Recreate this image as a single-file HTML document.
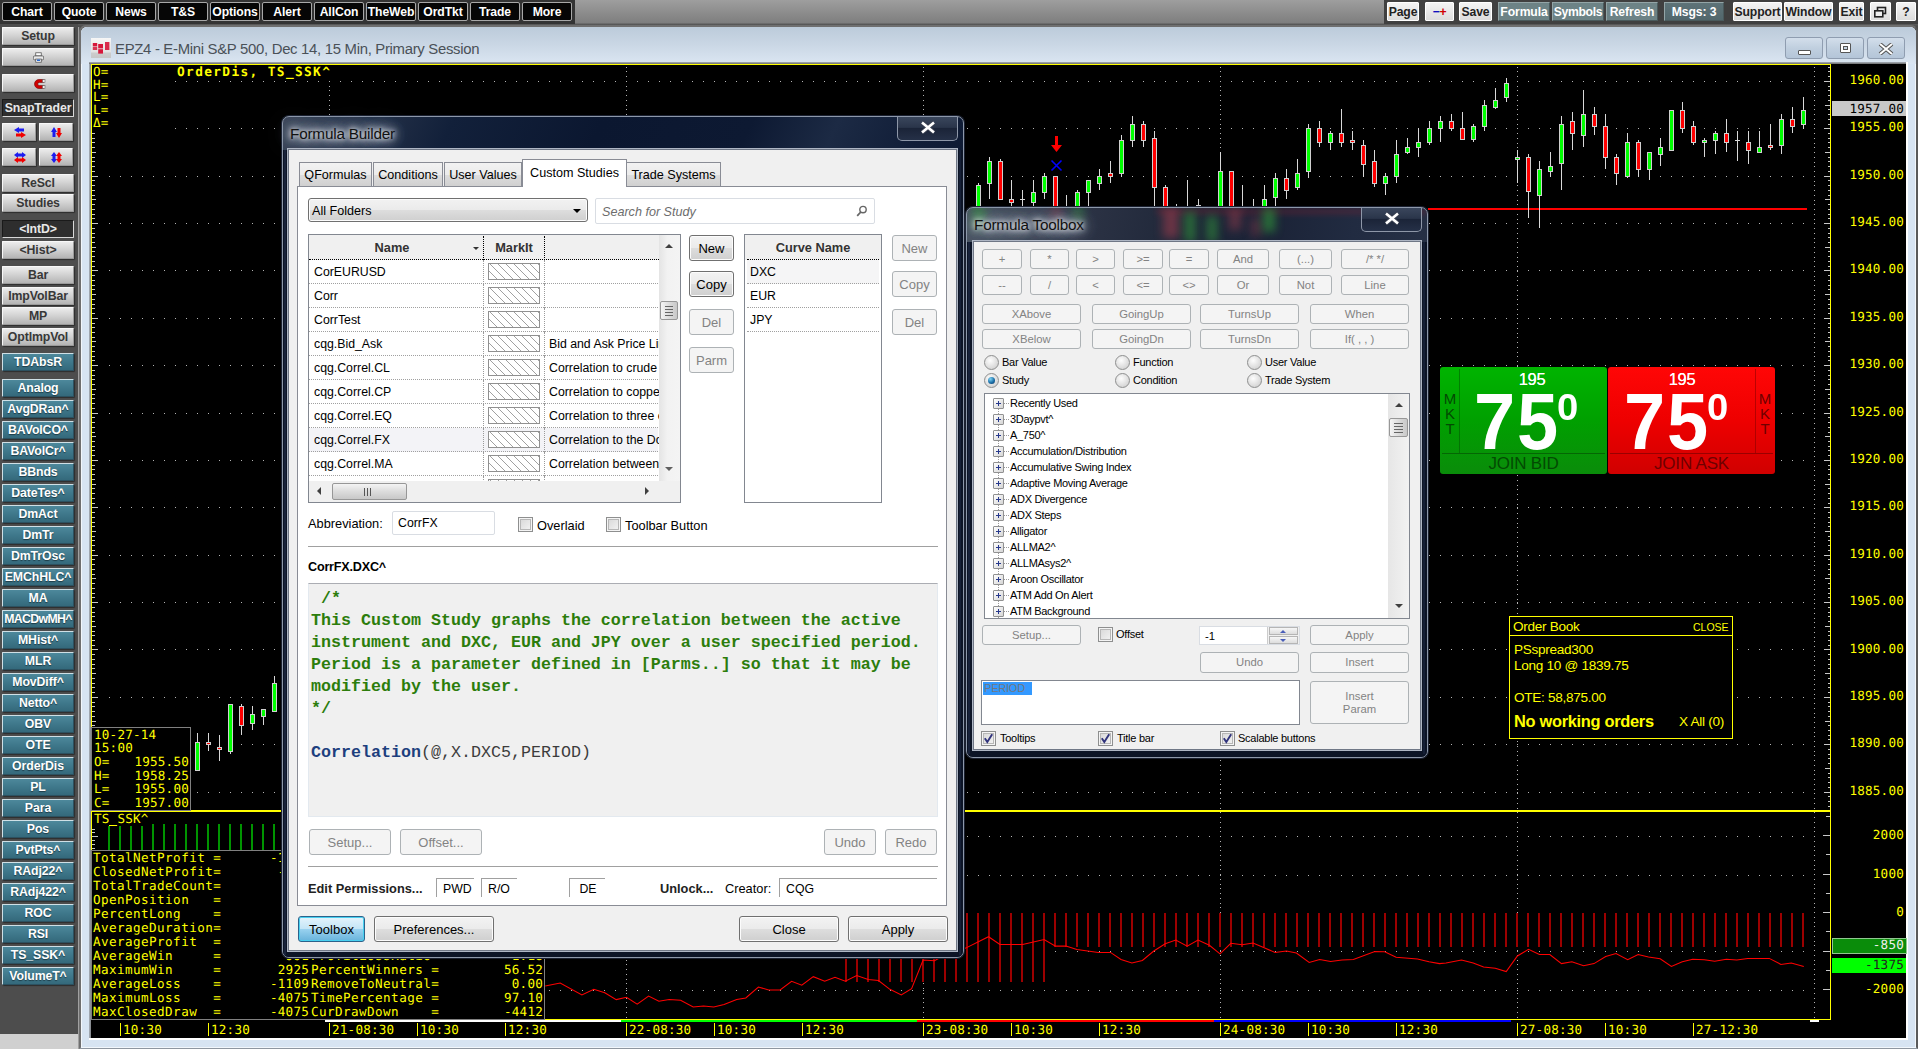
<!DOCTYPE html>
<html lang="en"><head><meta charset="utf-8"><title>CQG - Formula Builder</title>
<style>
*{box-sizing:border-box;margin:0;padding:0}
html,body{width:1918px;height:1049px;overflow:hidden;background:#4d4d4d;font-family:'Liberation Sans',Arial,sans-serif}
.abs{position:absolute}
#root{position:relative;width:1918px;height:1049px;overflow:hidden}
/* top toolbar */
#topbar{position:absolute;left:0;top:0;width:1918px;height:27px;background:linear-gradient(#9e9e9e,#7e7e7e 23px,#5a5a5a 24px,#4a4a4a 27px)}
#topgrad{position:absolute;left:0;top:0;width:575px;height:24px;background:#343434}
.tb{position:absolute;top:2px;height:19px;font-weight:bold;font-size:12.2px;line-height:18px;text-align:center;white-space:nowrap;overflow:hidden;letter-spacing:-0.1px}
.tb.k{background:#060606;color:#fff;border:1px solid #a8a8a8;border-radius:2px;text-shadow:0 0 1px #000}
.tb.w{background:linear-gradient(#f4f4f4,#dcdcdc);color:#222;border:1px solid #fff;border-radius:1px}
.tb.t{background:#6d8386;color:#fff;border:1px solid #93a5a7;border-bottom-color:#4a5a5c;border-right-color:#4a5a5c}
/* sidebar */
#side{position:absolute;left:0;top:24px;width:78px;height:1010px;background:#4d4d4d}
#sidebot{position:absolute;left:0;top:1034px;width:78px;height:15px;background:#d0d0d0}
#sideedge{position:absolute;left:78px;top:27px;width:3px;height:1022px;background:linear-gradient(90deg,#a0a0a0 0,#a0a0a0 1px,#4e4e4e 1.6px,#4a4a4a 3px)}
.sb{position:absolute;left:2px;width:72px;height:18px;font-weight:bold;font-size:12.3px;line-height:17px;text-align:center;white-space:nowrap;overflow:hidden;letter-spacing:-0.1px;border-radius:1px}
.sb.g{background:linear-gradient(#ececec,#d4d4d4 45%,#b4b4b4);color:#383838;border:1px solid #f8f8f8;border-right-color:#9a9a9a;border-bottom-color:#9a9a9a;box-shadow:1px 1px 1px #2e2e2e}
.sb.d{background:#2e2e2e;color:#e8e8e8;border:1px solid #1a1a1a;border-right-color:#d8d8d8;border-bottom-color:#d8d8d8}
.sb.t{background:linear-gradient(#4d889b,#3f788b 50%,#34697b);color:#fff;border:1px solid #cfe0e6;border-right-color:#2c5160;border-bottom-color:#2c5160;text-shadow:0 1px 1px #1d3b46;box-shadow:1px 1px 1px #2e2e2e}
.sb.h{width:34px}
/* chart window frame */
#win{position:absolute;left:81px;top:27px;width:1835px;height:1021px;background:#d7e4f2;border-radius:6px 6px 0 0;box-shadow:inset 0 0 0 1px #f2f7fc}
#wintitle{position:absolute;left:81px;top:27px;width:1835px;height:37px;background:linear-gradient(#bccbda,#c9d6e4 45%,#dbe6f2);border-radius:6px 6px 0 0}
#winfr{position:absolute;left:79px;top:25px;width:1839px;height:1024px;border:2px solid #6f6f6f;border-right-color:#5a5a5a;border-bottom-color:#8e96a0;border-radius:7px 7px 0 0}
#wtext{position:absolute;left:115px;top:39px;font-size:14.9px;line-height:20px;color:#4a5158;white-space:nowrap;letter-spacing:-0.3px}
.wb{position:absolute;top:37px;height:22px;width:38px;border:1px solid #8f9db0;border-radius:3px;background:linear-gradient(#d3deeb,#c0cfdf 50%,#b4c5d8)}

/* aero dialogs */
.dlg{position:absolute;border:1px solid #8d98aa;border-radius:7px;box-shadow:0 0 0 1px #1a2030}
.dlgtitle{position:absolute;font-size:15.3px;color:#111;white-space:nowrap;letter-spacing:-0.2px;text-shadow:0 0 5px #fff,0 0 9px #e8edf4,0 0 13px #c4ccd9,0 0 17px #a9b3c3,0 0 22px #8c98aa}
.dclose{position:absolute;border:1px solid #8e97a8;border-top:none;border-radius:0 0 5px 5px;background:linear-gradient(#3a465c,#2a354a 45%,#1b2438 50%,#253047)}
.client{position:absolute;background:#f0f0f0;border:1px solid #6f7786;box-shadow:0 0 0 1px #aeb6c4}
.ui{position:absolute;font-size:12.8px;color:#000;white-space:nowrap;line-height:15px}
.btn{position:absolute;border:1px solid #707070;border-radius:3px;background:linear-gradient(#f3f3f3,#ebebeb 48%,#dddddd 52%,#cfcfcf);box-shadow:inset 0 0 0 1px #fcfcfc;font-size:13px;text-align:center;color:#000;white-space:nowrap}
.btn.dis{border-color:#adb2b5;background:#f4f4f4;color:#838383;box-shadow:none}
.btn.def{border-color:#2c628b;background:linear-gradient(#e5f4fc,#c4e5f6 48%,#98d1ef 52%,#68b3db);box-shadow:inset 0 0 0 1px #48d0f0}
.inp{position:absolute;background:#fff;border:1px solid #abadb3;border-top-color:#8e9198;font-size:12.3px;white-space:nowrap;overflow:hidden}
.chk{position:absolute;width:15px;height:15px;border:1px solid #8e8f8f;background:linear-gradient(135deg,#d5d5d5,#f6f6f6);box-shadow:inset 0 0 0 1px #f4f4f4, inset 0 0 0 2px #b7b7b7}
.hatch{position:absolute;left:4px;top:3px;width:52px;height:17px;border:1px solid #909090;background:repeating-linear-gradient(45deg,#fff 0,#fff 5.007px,#a0a0a0 5.007px,#a0a0a0 5.657px)}
.trow{position:absolute;left:0;width:349px;height:24px;border-bottom:1px dotted #a0a0a0;font-size:12.3px;line-height:25px}
.trow span{position:absolute;top:0;white-space:nowrap}
.code{position:absolute;font-family:'Liberation Mono','DejaVu Sans Mono',monospace;font-size:16.67px;line-height:22px;font-weight:bold;color:#2c7d0c;white-space:pre}
.sbtrack{position:absolute;background:#f0f0f0}
.thumb{position:absolute;border:1px solid #979797;border-radius:2px;background:linear-gradient(90deg,#f4f4f4,#dcdcdc 50%,#c8c8c8)}
.thumbh{position:absolute;border:1px solid #979797;border-radius:2px;background:linear-gradient(#f4f4f4,#dcdcdc 50%,#c8c8c8)}

.tbtn{position:absolute;border:1px solid #adb2b5;border-radius:3px;background:#f4f4f4;color:#838383;font-size:11.3px;text-align:center;white-space:nowrap;height:20px;line-height:18px}
.rad{position:absolute;width:15px;height:15px;border-radius:50%;border:1px solid #8e8f8f;background:radial-gradient(circle at 40% 35%,#fdfdfd,#d8d8d8 70%,#c0c0c0)}
.tl{position:absolute;font-size:11px;letter-spacing:-0.25px;white-space:nowrap;color:#000;line-height:13px}
.tree{position:absolute;left:25px;font-size:11px;letter-spacing:-0.3px;white-space:nowrap;color:#000;line-height:14px;height:16px}
.plus{position:absolute;left:8px;width:11px;height:11px;border:1px solid #919191;border-radius:1px;background:linear-gradient(135deg,#fff,#d5d5d5)}
.plus:before{content:"";position:absolute;left:2px;top:4px;width:5px;height:1px;background:#26388c}
.plus:after{content:"";position:absolute;left:4px;top:2px;width:1px;height:5px;background:#26388c}
.snap{position:absolute;top:367px;height:107px;border-radius:3px;overflow:hidden;font-family:'Liberation Sans',Arial,sans-serif}
.ob{position:absolute;color:#ffff00;font-size:13.6px;white-space:nowrap;line-height:16px;letter-spacing:-0.3px}
</style></head>
<body><div id="root">
<div id="topbar"><div id="topgrad"></div><div class="tb k" style="left:2px;width:50px">Chart</div><div class="tb k" style="left:54px;width:50px">Quote</div><div class="tb k" style="left:106px;width:50px">News</div><div class="tb k" style="left:158px;width:50px">T&amp;S</div><div class="tb k" style="left:210px;width:50px">Options</div><div class="tb k" style="left:262px;width:50px">Alert</div><div class="tb k" style="left:314px;width:50px">AllCon</div><div class="tb k" style="left:366px;width:50px">TheWeb</div><div class="tb k" style="left:418px;width:50px">OrdTkt</div><div class="tb k" style="left:470px;width:50px">Trade</div><div class="tb k" style="left:522px;width:50px">More</div><div style="position:absolute;left:1384px;top:0;width:534px;height:24px;background:#404040"></div><div class="tb w" style="left:1387px;width:32px">Page</div><div class="tb w" style="left:1425px;width:29px"><span style="color:#1010c0">&#8722;</span><span style="color:#d00000">+</span></div><div class="tb w" style="left:1459px;width:33px">Save</div><div class="tb t" style="left:1498px;width:52px">Formula</div><div class="tb t" style="left:1552px;width:52px;letter-spacing:-0.35px">Symbols</div><div class="tb t" style="left:1606px;width:52px">Refresh</div><div class="tb t" style="left:1664px;width:60px;background:linear-gradient(#5e7378,#52676c)">Msgs: 3</div><div class="tb w" style="left:1733px;width:49px">Support</div><div class="tb w" style="left:1784px;width:49px">Window</div><div class="tb w" style="left:1839px;width:25px">Exit</div><div class="tb w" style="left:1870px;width:21px"><svg width="13" height="12" viewBox="0 0 13 12" style="position:absolute;left:3px;top:3px"><rect x="3.5" y="1.5" width="8" height="6" fill="none" stroke="#222" stroke-width="1.6"/><rect x="0.8" y="4.8" width="8" height="6" fill="#eee" stroke="#222" stroke-width="1.6"/></svg></div><div class="tb w" style="left:1896px;width:20px">?</div></div>
<div id="side"></div><div id="sidebot"></div><div id="sideedge"></div><div class="sb g" style="top:27px">Setup</div><div class="sb g" style="top:48px"><svg width="11" height="11" viewBox="0 0 14 13" style="position:absolute;left:30px;top:3px"><rect x="3.5" y="0.5" width="7" height="4" fill="#fff" stroke="#555"/><rect x="0.5" y="4.5" width="13" height="5" rx="1.5" fill="#e8e8e8" stroke="#555"/><rect x="3.5" y="8.5" width="7" height="4" fill="#fff" stroke="#555"/><rect x="5" y="9" width="4" height="2" fill="#2a6ad0"/></svg></div><div class="sb g" style="top:74px"><svg width="14" height="12" viewBox="0 0 14 12" style="position:absolute;left:30px;top:3px"><path d="M11 1.5 H6 A4.5 4.5 0 0 0 6 10.5 H11 V7.6 H6.3 A1.6 1.6 0 0 1 6.3 4.4 H11 Z" fill="#d00000" stroke="#700" stroke-width="0.6"/><rect x="9.5" y="1.5" width="2.5" height="2.9" fill="#eee" stroke="#555" stroke-width="0.5"/><rect x="9.5" y="7.6" width="2.5" height="2.9" fill="#eee" stroke="#555" stroke-width="0.5"/></svg></div><div class="sb d" style="top:99px">SnapTrader</div><div class="sb g h" style="top:123px"><svg width="12" height="11" viewBox="0 0 12 11" style="position:absolute;left:11px;top:3px"><path d="M0 3 L5 0 V1.5 H10 V4.5 H5 V6 Z" fill="#1c1cf0"/><path d="M12 8 L7 5 V6.5 H2 V9.5 H7 V11 Z" fill="#f00000"/></svg></div><div class="sb g h" style="top:123px;left:39px"><svg width="12" height="11" viewBox="0 0 12 11" style="position:absolute;left:11px;top:3px"><path d="M3 0 L6 5 H4.5 V10 H1.5 V5 H0 Z" fill="#1c1cf0"/><path d="M8 11 L5 6 H6.5 V1 H9.5 V6 H11 Z" fill="#f00000"/></svg></div><div class="sb g h" style="top:148px"><svg width="12" height="11" viewBox="0 0 12 11" style="position:absolute;left:11px;top:3px"><path d="M0 3 L4 0 V1.5 H8 V0 L12 3 L8 6 V4.5 H4 V6 Z" fill="#1c1cf0"/><path d="M0 8 L4 5 V6.5 H8 V5 L12 8 L8 11 V9.5 H4 V11 Z" fill="#f00000"/></svg></div><div class="sb g h" style="top:148px;left:39px"><svg width="12" height="11" viewBox="0 0 12 11" style="position:absolute;left:11px;top:3px"><path d="M3 0 L6 4 H4.5 V7 H6 L3 11 L0 7 H1.5 V4 H0 Z" fill="#1c1cf0"/><path d="M8 0 L11 4 H9.5 V7 H11 L8 11 L5 7 H6.5 V4 H5 Z" fill="#f00000"/></svg></div><div class="sb g" style="top:174px">ReScl</div><div class="sb g" style="top:194px">Studies</div><div class="sb d" style="top:220px">&lt;IntD&gt;</div><div class="sb g" style="top:241px">&lt;Hist&gt;</div><div class="sb g" style="top:266px">Bar</div><div class="sb g" style="top:287px">ImpVolBar</div><div class="sb g" style="top:307px">MP</div><div class="sb g" style="top:328px">OptImpVol</div><div class="sb t" style="top:353px">TDAbsR</div><div class="sb t" style="top:379px">Analog</div><div class="sb t" style="top:400px">AvgDRan^</div><div class="sb t" style="top:421px">BAVolCO^</div><div class="sb t" style="top:442px">BAVolCr^</div><div class="sb t" style="top:463px">BBnds</div><div class="sb t" style="top:484px">DateTes^</div><div class="sb t" style="top:505px">DmAct</div><div class="sb t" style="top:526px">DmTr</div><div class="sb t" style="top:547px">DmTrOsc</div><div class="sb t" style="top:568px">EMChHLC^</div><div class="sb t" style="top:589px">MA</div><div class="sb t" style="top:610px;letter-spacing:-0.65px">MACDwMH^</div><div class="sb t" style="top:631px">MHist^</div><div class="sb t" style="top:652px">MLR</div><div class="sb t" style="top:673px">MovDiff^</div><div class="sb t" style="top:694px">Netto^</div><div class="sb t" style="top:715px">OBV</div><div class="sb t" style="top:736px">OTE</div><div class="sb t" style="top:757px">OrderDis</div><div class="sb t" style="top:778px">PL</div><div class="sb t" style="top:799px">Para</div><div class="sb t" style="top:820px">Pos</div><div class="sb t" style="top:841px">PvtPts^</div><div class="sb t" style="top:862px">RAdj22^</div><div class="sb t" style="top:883px">RAdj422^</div><div class="sb t" style="top:904px">ROC</div><div class="sb t" style="top:925px">RSI</div><div class="sb t" style="top:946px">TS_SSK^</div><div class="sb t" style="top:967px">VolumeT^</div>
<div id="winfr"></div><div id="win"></div><div id="wintitle"></div><svg width="20" height="20" viewBox="0 0 20 20" style="position:absolute;left:91px;top:38px"><defs><linearGradient id="wig" x1="0" y1="0" x2="0" y2="1"><stop offset="0" stop-color="#f6f6f6"/><stop offset="0.7" stop-color="#e2e2e2"/><stop offset="0.75" stop-color="#cccccc"/><stop offset="1" stop-color="#c6c6c6"/></linearGradient></defs><rect width="20" height="20" fill="url(#wig)"/><g fill="#d6163a"><rect x="1.8" y="5" width="4.4" height="3"/><rect x="1.8" y="8.5" width="4.4" height="3.5" opacity=".85"/><rect x="7.2" y="6" width="4.8" height="4.4"/><rect x="7.2" y="11.2" width="4.8" height="4.4"/><rect x="14" y="4" width="4.4" height="8" opacity=".9"/></g></svg><div id="wtext">EPZ4 - E-Mini S&amp;P 500, Dec 14, 15 Min, Primary Session</div><div class="wb" style="left:1785px"><div style="position:absolute;left:12px;top:12px;width:13px;height:5px;border:1px solid #555;background:#fff;border-radius:1px"></div></div><div class="wb" style="left:1826px"><div style="position:absolute;left:13px;top:5px;width:11px;height:10px;border:1px solid #555;background:#fff;border-radius:1px"><div style="position:absolute;left:2px;top:2px;width:5px;height:4px;border:1px solid #555;background:#c5d3e2"></div></div></div><div class="wb" style="left:1867px"><svg width="16" height="12" viewBox="0 0 16 12" style="position:absolute;left:10px;top:5px"><path d="M2 1 L14 11 M14 1 L2 11" stroke="#555" stroke-width="4"/><path d="M2 1 L14 11 M14 1 L2 11" stroke="#fff" stroke-width="2"/></svg></div><div class="abs" style="left:89px;top:1038px;width:1819px;height:2px;background:#fff"></div><div class="abs" style="left:1906px;top:62px;width:2px;height:978px;background:#fff"></div><div class="abs" style="left:89px;top:62px;width:3px;height:976px;background:linear-gradient(90deg,#aab2bc,#6c6c6c)"></div><div class="abs" style="left:89px;top:62px;width:1817px;height:2px;background:linear-gradient(#aab2bc,#6c6c6c)"></div>
<svg class="chart" width="1918" height="1049" viewBox="0 0 1918 1049" style="position:absolute;left:0;top:0" shape-rendering="crispEdges">
<defs><pattern id="hd" x="978" y="0" width="11" height="1" patternUnits="userSpaceOnUse"><rect x="0" y="0" width="1" height="1" fill="#b4b4b4"/></pattern><pattern id="vd" x="0" y="62" width="1" height="19" patternUnits="userSpaceOnUse"><rect x="0" y="0" width="1" height="1" fill="#b4b4b4"/><rect x="0" y="5" width="1" height="1" fill="#b4b4b4"/><rect x="0" y="9" width="1" height="1" fill="#b4b4b4"/><rect x="0" y="14" width="1" height="1" fill="#b4b4b4"/></pattern></defs>
<rect x="91" y="64" width="1815" height="974" fill="#000"/>
<rect x="100" y="81" width="1712" height="1" fill="url(#hd)"/>
<rect x="100" y="128" width="1712" height="1" fill="url(#hd)"/>
<rect x="100" y="176" width="1712" height="1" fill="url(#hd)"/>
<rect x="100" y="223" width="1712" height="1" fill="url(#hd)"/>
<rect x="100" y="270" width="1712" height="1" fill="url(#hd)"/>
<rect x="100" y="318" width="1712" height="1" fill="url(#hd)"/>
<rect x="100" y="365" width="1712" height="1" fill="url(#hd)"/>
<rect x="100" y="413" width="1712" height="1" fill="url(#hd)"/>
<rect x="100" y="460" width="1712" height="1" fill="url(#hd)"/>
<rect x="100" y="507" width="1712" height="1" fill="url(#hd)"/>
<rect x="100" y="555" width="1712" height="1" fill="url(#hd)"/>
<rect x="100" y="602" width="1712" height="1" fill="url(#hd)"/>
<rect x="100" y="649" width="1712" height="1" fill="url(#hd)"/>
<rect x="100" y="697" width="1712" height="1" fill="url(#hd)"/>
<rect x="100" y="744" width="1712" height="1" fill="url(#hd)"/>
<rect x="100" y="792" width="1712" height="1" fill="url(#hd)"/>
<rect x="298" y="836" width="1514" height="1" fill="url(#hd)"/>
<rect x="298" y="875" width="1514" height="1" fill="url(#hd)"/>
<rect x="298" y="913" width="1514" height="1" fill="url(#hd)"/>
<rect x="298" y="951" width="1514" height="1" fill="url(#hd)"/>
<rect x="298" y="990" width="1514" height="1" fill="url(#hd)"/>
<rect x="329" y="67" width="1" height="951" fill="url(#vd)"/>
<rect x="626" y="67" width="1" height="951" fill="url(#vd)"/>
<rect x="923" y="67" width="1" height="951" fill="url(#vd)"/>
<rect x="1220" y="67" width="1" height="951" fill="url(#vd)"/>
<rect x="1517" y="67" width="1" height="951" fill="url(#vd)"/>
<rect x="1814" y="67" width="1" height="951" fill="url(#vd)"/>
<rect x="92" y="65" width="82" height="66" fill="#000"/>
<rect x="174" y="65" width="160" height="15" fill="#000"/>
<rect x="91" y="64" width="1740" height="1" fill="#ffff00"/>
<rect x="91" y="64" width="1" height="956" fill="#ffff00"/>
<rect x="1830" y="64" width="1" height="956" fill="#ffff00"/>
<rect x="91" y="1019" width="1740" height="1" fill="#ffff00"/>
<rect x="91" y="810" width="1740" height="2" fill="#ffff00"/>
<rect x="1828" y="67" width="2" height="1" fill="#c8c8c8"/>
<rect x="1828" y="71" width="2" height="1" fill="#c8c8c8"/>
<rect x="1828" y="76" width="2" height="1" fill="#c8c8c8"/>
<rect x="1824" y="81" width="6" height="1" fill="#c8c8c8"/>
<rect x="1828" y="86" width="2" height="1" fill="#c8c8c8"/>
<rect x="1828" y="90" width="2" height="1" fill="#c8c8c8"/>
<rect x="1828" y="95" width="2" height="1" fill="#c8c8c8"/>
<rect x="1828" y="100" width="2" height="1" fill="#c8c8c8"/>
<rect x="1825" y="105" width="5" height="1" fill="#c8c8c8"/>
<rect x="1828" y="109" width="2" height="1" fill="#c8c8c8"/>
<rect x="1828" y="114" width="2" height="1" fill="#c8c8c8"/>
<rect x="1828" y="119" width="2" height="1" fill="#c8c8c8"/>
<rect x="1828" y="124" width="2" height="1" fill="#c8c8c8"/>
<rect x="1824" y="128" width="6" height="1" fill="#c8c8c8"/>
<rect x="1828" y="133" width="2" height="1" fill="#c8c8c8"/>
<rect x="92" y="133" width="3" height="1" fill="#c8c8c8"/>
<rect x="1828" y="138" width="2" height="1" fill="#c8c8c8"/>
<rect x="92" y="138" width="3" height="1" fill="#c8c8c8"/>
<rect x="1828" y="142" width="2" height="1" fill="#c8c8c8"/>
<rect x="92" y="142" width="3" height="1" fill="#c8c8c8"/>
<rect x="1828" y="147" width="2" height="1" fill="#c8c8c8"/>
<rect x="92" y="147" width="3" height="1" fill="#c8c8c8"/>
<rect x="1825" y="152" width="5" height="1" fill="#c8c8c8"/>
<rect x="92" y="152" width="4" height="1" fill="#c8c8c8"/>
<rect x="1828" y="157" width="2" height="1" fill="#c8c8c8"/>
<rect x="92" y="157" width="3" height="1" fill="#c8c8c8"/>
<rect x="1828" y="161" width="2" height="1" fill="#c8c8c8"/>
<rect x="92" y="161" width="3" height="1" fill="#c8c8c8"/>
<rect x="1828" y="166" width="2" height="1" fill="#c8c8c8"/>
<rect x="92" y="166" width="3" height="1" fill="#c8c8c8"/>
<rect x="1828" y="171" width="2" height="1" fill="#c8c8c8"/>
<rect x="92" y="171" width="3" height="1" fill="#c8c8c8"/>
<rect x="1824" y="176" width="6" height="1" fill="#c8c8c8"/>
<rect x="92" y="176" width="6" height="1" fill="#c8c8c8"/>
<rect x="1828" y="180" width="2" height="1" fill="#c8c8c8"/>
<rect x="92" y="180" width="3" height="1" fill="#c8c8c8"/>
<rect x="1828" y="185" width="2" height="1" fill="#c8c8c8"/>
<rect x="92" y="185" width="3" height="1" fill="#c8c8c8"/>
<rect x="1828" y="190" width="2" height="1" fill="#c8c8c8"/>
<rect x="92" y="190" width="3" height="1" fill="#c8c8c8"/>
<rect x="1828" y="195" width="2" height="1" fill="#c8c8c8"/>
<rect x="92" y="195" width="3" height="1" fill="#c8c8c8"/>
<rect x="1825" y="199" width="5" height="1" fill="#c8c8c8"/>
<rect x="92" y="199" width="4" height="1" fill="#c8c8c8"/>
<rect x="1828" y="204" width="2" height="1" fill="#c8c8c8"/>
<rect x="92" y="204" width="3" height="1" fill="#c8c8c8"/>
<rect x="1828" y="209" width="2" height="1" fill="#c8c8c8"/>
<rect x="92" y="209" width="3" height="1" fill="#c8c8c8"/>
<rect x="1828" y="214" width="2" height="1" fill="#c8c8c8"/>
<rect x="92" y="214" width="3" height="1" fill="#c8c8c8"/>
<rect x="1828" y="218" width="2" height="1" fill="#c8c8c8"/>
<rect x="92" y="218" width="3" height="1" fill="#c8c8c8"/>
<rect x="1824" y="223" width="6" height="1" fill="#c8c8c8"/>
<rect x="92" y="223" width="6" height="1" fill="#c8c8c8"/>
<rect x="1828" y="228" width="2" height="1" fill="#c8c8c8"/>
<rect x="92" y="228" width="3" height="1" fill="#c8c8c8"/>
<rect x="1828" y="233" width="2" height="1" fill="#c8c8c8"/>
<rect x="92" y="233" width="3" height="1" fill="#c8c8c8"/>
<rect x="1828" y="237" width="2" height="1" fill="#c8c8c8"/>
<rect x="92" y="237" width="3" height="1" fill="#c8c8c8"/>
<rect x="1828" y="242" width="2" height="1" fill="#c8c8c8"/>
<rect x="92" y="242" width="3" height="1" fill="#c8c8c8"/>
<rect x="1825" y="247" width="5" height="1" fill="#c8c8c8"/>
<rect x="92" y="247" width="4" height="1" fill="#c8c8c8"/>
<rect x="1828" y="251" width="2" height="1" fill="#c8c8c8"/>
<rect x="92" y="251" width="3" height="1" fill="#c8c8c8"/>
<rect x="1828" y="256" width="2" height="1" fill="#c8c8c8"/>
<rect x="92" y="256" width="3" height="1" fill="#c8c8c8"/>
<rect x="1828" y="261" width="2" height="1" fill="#c8c8c8"/>
<rect x="92" y="261" width="3" height="1" fill="#c8c8c8"/>
<rect x="1828" y="266" width="2" height="1" fill="#c8c8c8"/>
<rect x="92" y="266" width="3" height="1" fill="#c8c8c8"/>
<rect x="1824" y="270" width="6" height="1" fill="#c8c8c8"/>
<rect x="92" y="270" width="6" height="1" fill="#c8c8c8"/>
<rect x="1828" y="275" width="2" height="1" fill="#c8c8c8"/>
<rect x="92" y="275" width="3" height="1" fill="#c8c8c8"/>
<rect x="1828" y="280" width="2" height="1" fill="#c8c8c8"/>
<rect x="92" y="280" width="3" height="1" fill="#c8c8c8"/>
<rect x="1828" y="285" width="2" height="1" fill="#c8c8c8"/>
<rect x="92" y="285" width="3" height="1" fill="#c8c8c8"/>
<rect x="1828" y="289" width="2" height="1" fill="#c8c8c8"/>
<rect x="92" y="289" width="3" height="1" fill="#c8c8c8"/>
<rect x="1825" y="294" width="5" height="1" fill="#c8c8c8"/>
<rect x="92" y="294" width="4" height="1" fill="#c8c8c8"/>
<rect x="1828" y="299" width="2" height="1" fill="#c8c8c8"/>
<rect x="92" y="299" width="3" height="1" fill="#c8c8c8"/>
<rect x="1828" y="304" width="2" height="1" fill="#c8c8c8"/>
<rect x="92" y="304" width="3" height="1" fill="#c8c8c8"/>
<rect x="1828" y="308" width="2" height="1" fill="#c8c8c8"/>
<rect x="92" y="308" width="3" height="1" fill="#c8c8c8"/>
<rect x="1828" y="313" width="2" height="1" fill="#c8c8c8"/>
<rect x="92" y="313" width="3" height="1" fill="#c8c8c8"/>
<rect x="1824" y="318" width="6" height="1" fill="#c8c8c8"/>
<rect x="92" y="318" width="6" height="1" fill="#c8c8c8"/>
<rect x="1828" y="323" width="2" height="1" fill="#c8c8c8"/>
<rect x="92" y="323" width="3" height="1" fill="#c8c8c8"/>
<rect x="1828" y="327" width="2" height="1" fill="#c8c8c8"/>
<rect x="92" y="327" width="3" height="1" fill="#c8c8c8"/>
<rect x="1828" y="332" width="2" height="1" fill="#c8c8c8"/>
<rect x="92" y="332" width="3" height="1" fill="#c8c8c8"/>
<rect x="1828" y="337" width="2" height="1" fill="#c8c8c8"/>
<rect x="92" y="337" width="3" height="1" fill="#c8c8c8"/>
<rect x="1825" y="341" width="5" height="1" fill="#c8c8c8"/>
<rect x="92" y="341" width="4" height="1" fill="#c8c8c8"/>
<rect x="1828" y="346" width="2" height="1" fill="#c8c8c8"/>
<rect x="92" y="346" width="3" height="1" fill="#c8c8c8"/>
<rect x="1828" y="351" width="2" height="1" fill="#c8c8c8"/>
<rect x="92" y="351" width="3" height="1" fill="#c8c8c8"/>
<rect x="1828" y="356" width="2" height="1" fill="#c8c8c8"/>
<rect x="92" y="356" width="3" height="1" fill="#c8c8c8"/>
<rect x="1828" y="360" width="2" height="1" fill="#c8c8c8"/>
<rect x="92" y="360" width="3" height="1" fill="#c8c8c8"/>
<rect x="1824" y="365" width="6" height="1" fill="#c8c8c8"/>
<rect x="92" y="365" width="6" height="1" fill="#c8c8c8"/>
<rect x="1828" y="370" width="2" height="1" fill="#c8c8c8"/>
<rect x="92" y="370" width="3" height="1" fill="#c8c8c8"/>
<rect x="1828" y="375" width="2" height="1" fill="#c8c8c8"/>
<rect x="92" y="375" width="3" height="1" fill="#c8c8c8"/>
<rect x="1828" y="379" width="2" height="1" fill="#c8c8c8"/>
<rect x="92" y="379" width="3" height="1" fill="#c8c8c8"/>
<rect x="1828" y="384" width="2" height="1" fill="#c8c8c8"/>
<rect x="92" y="384" width="3" height="1" fill="#c8c8c8"/>
<rect x="1825" y="389" width="5" height="1" fill="#c8c8c8"/>
<rect x="92" y="389" width="4" height="1" fill="#c8c8c8"/>
<rect x="1828" y="394" width="2" height="1" fill="#c8c8c8"/>
<rect x="92" y="394" width="3" height="1" fill="#c8c8c8"/>
<rect x="1828" y="398" width="2" height="1" fill="#c8c8c8"/>
<rect x="92" y="398" width="3" height="1" fill="#c8c8c8"/>
<rect x="1828" y="403" width="2" height="1" fill="#c8c8c8"/>
<rect x="92" y="403" width="3" height="1" fill="#c8c8c8"/>
<rect x="1828" y="408" width="2" height="1" fill="#c8c8c8"/>
<rect x="92" y="408" width="3" height="1" fill="#c8c8c8"/>
<rect x="1824" y="413" width="6" height="1" fill="#c8c8c8"/>
<rect x="92" y="413" width="6" height="1" fill="#c8c8c8"/>
<rect x="1828" y="417" width="2" height="1" fill="#c8c8c8"/>
<rect x="92" y="417" width="3" height="1" fill="#c8c8c8"/>
<rect x="1828" y="422" width="2" height="1" fill="#c8c8c8"/>
<rect x="92" y="422" width="3" height="1" fill="#c8c8c8"/>
<rect x="1828" y="427" width="2" height="1" fill="#c8c8c8"/>
<rect x="92" y="427" width="3" height="1" fill="#c8c8c8"/>
<rect x="1828" y="432" width="2" height="1" fill="#c8c8c8"/>
<rect x="92" y="432" width="3" height="1" fill="#c8c8c8"/>
<rect x="1825" y="436" width="5" height="1" fill="#c8c8c8"/>
<rect x="92" y="436" width="4" height="1" fill="#c8c8c8"/>
<rect x="1828" y="441" width="2" height="1" fill="#c8c8c8"/>
<rect x="92" y="441" width="3" height="1" fill="#c8c8c8"/>
<rect x="1828" y="446" width="2" height="1" fill="#c8c8c8"/>
<rect x="92" y="446" width="3" height="1" fill="#c8c8c8"/>
<rect x="1828" y="450" width="2" height="1" fill="#c8c8c8"/>
<rect x="92" y="450" width="3" height="1" fill="#c8c8c8"/>
<rect x="1828" y="455" width="2" height="1" fill="#c8c8c8"/>
<rect x="92" y="455" width="3" height="1" fill="#c8c8c8"/>
<rect x="1824" y="460" width="6" height="1" fill="#c8c8c8"/>
<rect x="92" y="460" width="6" height="1" fill="#c8c8c8"/>
<rect x="1828" y="465" width="2" height="1" fill="#c8c8c8"/>
<rect x="92" y="465" width="3" height="1" fill="#c8c8c8"/>
<rect x="1828" y="469" width="2" height="1" fill="#c8c8c8"/>
<rect x="92" y="469" width="3" height="1" fill="#c8c8c8"/>
<rect x="1828" y="474" width="2" height="1" fill="#c8c8c8"/>
<rect x="92" y="474" width="3" height="1" fill="#c8c8c8"/>
<rect x="1828" y="479" width="2" height="1" fill="#c8c8c8"/>
<rect x="92" y="479" width="3" height="1" fill="#c8c8c8"/>
<rect x="1825" y="484" width="5" height="1" fill="#c8c8c8"/>
<rect x="92" y="484" width="4" height="1" fill="#c8c8c8"/>
<rect x="1828" y="488" width="2" height="1" fill="#c8c8c8"/>
<rect x="92" y="488" width="3" height="1" fill="#c8c8c8"/>
<rect x="1828" y="493" width="2" height="1" fill="#c8c8c8"/>
<rect x="92" y="493" width="3" height="1" fill="#c8c8c8"/>
<rect x="1828" y="498" width="2" height="1" fill="#c8c8c8"/>
<rect x="92" y="498" width="3" height="1" fill="#c8c8c8"/>
<rect x="1828" y="503" width="2" height="1" fill="#c8c8c8"/>
<rect x="92" y="503" width="3" height="1" fill="#c8c8c8"/>
<rect x="1824" y="507" width="6" height="1" fill="#c8c8c8"/>
<rect x="92" y="507" width="6" height="1" fill="#c8c8c8"/>
<rect x="1828" y="512" width="2" height="1" fill="#c8c8c8"/>
<rect x="92" y="512" width="3" height="1" fill="#c8c8c8"/>
<rect x="1828" y="517" width="2" height="1" fill="#c8c8c8"/>
<rect x="92" y="517" width="3" height="1" fill="#c8c8c8"/>
<rect x="1828" y="522" width="2" height="1" fill="#c8c8c8"/>
<rect x="92" y="522" width="3" height="1" fill="#c8c8c8"/>
<rect x="1828" y="526" width="2" height="1" fill="#c8c8c8"/>
<rect x="92" y="526" width="3" height="1" fill="#c8c8c8"/>
<rect x="1825" y="531" width="5" height="1" fill="#c8c8c8"/>
<rect x="92" y="531" width="4" height="1" fill="#c8c8c8"/>
<rect x="1828" y="536" width="2" height="1" fill="#c8c8c8"/>
<rect x="92" y="536" width="3" height="1" fill="#c8c8c8"/>
<rect x="1828" y="540" width="2" height="1" fill="#c8c8c8"/>
<rect x="92" y="540" width="3" height="1" fill="#c8c8c8"/>
<rect x="1828" y="545" width="2" height="1" fill="#c8c8c8"/>
<rect x="92" y="545" width="3" height="1" fill="#c8c8c8"/>
<rect x="1828" y="550" width="2" height="1" fill="#c8c8c8"/>
<rect x="92" y="550" width="3" height="1" fill="#c8c8c8"/>
<rect x="1824" y="555" width="6" height="1" fill="#c8c8c8"/>
<rect x="92" y="555" width="6" height="1" fill="#c8c8c8"/>
<rect x="1828" y="559" width="2" height="1" fill="#c8c8c8"/>
<rect x="92" y="559" width="3" height="1" fill="#c8c8c8"/>
<rect x="1828" y="564" width="2" height="1" fill="#c8c8c8"/>
<rect x="92" y="564" width="3" height="1" fill="#c8c8c8"/>
<rect x="1828" y="569" width="2" height="1" fill="#c8c8c8"/>
<rect x="92" y="569" width="3" height="1" fill="#c8c8c8"/>
<rect x="1828" y="574" width="2" height="1" fill="#c8c8c8"/>
<rect x="92" y="574" width="3" height="1" fill="#c8c8c8"/>
<rect x="1825" y="578" width="5" height="1" fill="#c8c8c8"/>
<rect x="92" y="578" width="4" height="1" fill="#c8c8c8"/>
<rect x="1828" y="583" width="2" height="1" fill="#c8c8c8"/>
<rect x="92" y="583" width="3" height="1" fill="#c8c8c8"/>
<rect x="1828" y="588" width="2" height="1" fill="#c8c8c8"/>
<rect x="92" y="588" width="3" height="1" fill="#c8c8c8"/>
<rect x="1828" y="593" width="2" height="1" fill="#c8c8c8"/>
<rect x="92" y="593" width="3" height="1" fill="#c8c8c8"/>
<rect x="1828" y="597" width="2" height="1" fill="#c8c8c8"/>
<rect x="92" y="597" width="3" height="1" fill="#c8c8c8"/>
<rect x="1824" y="602" width="6" height="1" fill="#c8c8c8"/>
<rect x="92" y="602" width="6" height="1" fill="#c8c8c8"/>
<rect x="1828" y="607" width="2" height="1" fill="#c8c8c8"/>
<rect x="92" y="607" width="3" height="1" fill="#c8c8c8"/>
<rect x="1828" y="612" width="2" height="1" fill="#c8c8c8"/>
<rect x="92" y="612" width="3" height="1" fill="#c8c8c8"/>
<rect x="1828" y="616" width="2" height="1" fill="#c8c8c8"/>
<rect x="92" y="616" width="3" height="1" fill="#c8c8c8"/>
<rect x="1828" y="621" width="2" height="1" fill="#c8c8c8"/>
<rect x="92" y="621" width="3" height="1" fill="#c8c8c8"/>
<rect x="1825" y="626" width="5" height="1" fill="#c8c8c8"/>
<rect x="92" y="626" width="4" height="1" fill="#c8c8c8"/>
<rect x="1828" y="631" width="2" height="1" fill="#c8c8c8"/>
<rect x="92" y="631" width="3" height="1" fill="#c8c8c8"/>
<rect x="1828" y="635" width="2" height="1" fill="#c8c8c8"/>
<rect x="92" y="635" width="3" height="1" fill="#c8c8c8"/>
<rect x="1828" y="640" width="2" height="1" fill="#c8c8c8"/>
<rect x="92" y="640" width="3" height="1" fill="#c8c8c8"/>
<rect x="1828" y="645" width="2" height="1" fill="#c8c8c8"/>
<rect x="92" y="645" width="3" height="1" fill="#c8c8c8"/>
<rect x="1824" y="649" width="6" height="1" fill="#c8c8c8"/>
<rect x="92" y="649" width="6" height="1" fill="#c8c8c8"/>
<rect x="1828" y="654" width="2" height="1" fill="#c8c8c8"/>
<rect x="92" y="654" width="3" height="1" fill="#c8c8c8"/>
<rect x="1828" y="659" width="2" height="1" fill="#c8c8c8"/>
<rect x="92" y="659" width="3" height="1" fill="#c8c8c8"/>
<rect x="1828" y="664" width="2" height="1" fill="#c8c8c8"/>
<rect x="92" y="664" width="3" height="1" fill="#c8c8c8"/>
<rect x="1828" y="668" width="2" height="1" fill="#c8c8c8"/>
<rect x="92" y="668" width="3" height="1" fill="#c8c8c8"/>
<rect x="1825" y="673" width="5" height="1" fill="#c8c8c8"/>
<rect x="92" y="673" width="4" height="1" fill="#c8c8c8"/>
<rect x="1828" y="678" width="2" height="1" fill="#c8c8c8"/>
<rect x="92" y="678" width="3" height="1" fill="#c8c8c8"/>
<rect x="1828" y="683" width="2" height="1" fill="#c8c8c8"/>
<rect x="92" y="683" width="3" height="1" fill="#c8c8c8"/>
<rect x="1828" y="687" width="2" height="1" fill="#c8c8c8"/>
<rect x="92" y="687" width="3" height="1" fill="#c8c8c8"/>
<rect x="1828" y="692" width="2" height="1" fill="#c8c8c8"/>
<rect x="92" y="692" width="3" height="1" fill="#c8c8c8"/>
<rect x="1824" y="697" width="6" height="1" fill="#c8c8c8"/>
<rect x="92" y="697" width="6" height="1" fill="#c8c8c8"/>
<rect x="1828" y="702" width="2" height="1" fill="#c8c8c8"/>
<rect x="92" y="702" width="3" height="1" fill="#c8c8c8"/>
<rect x="1828" y="706" width="2" height="1" fill="#c8c8c8"/>
<rect x="92" y="706" width="3" height="1" fill="#c8c8c8"/>
<rect x="1828" y="711" width="2" height="1" fill="#c8c8c8"/>
<rect x="92" y="711" width="3" height="1" fill="#c8c8c8"/>
<rect x="1828" y="716" width="2" height="1" fill="#c8c8c8"/>
<rect x="92" y="716" width="3" height="1" fill="#c8c8c8"/>
<rect x="1825" y="721" width="5" height="1" fill="#c8c8c8"/>
<rect x="92" y="721" width="4" height="1" fill="#c8c8c8"/>
<rect x="1828" y="725" width="2" height="1" fill="#c8c8c8"/>
<rect x="92" y="725" width="3" height="1" fill="#c8c8c8"/>
<rect x="1828" y="730" width="2" height="1" fill="#c8c8c8"/>
<rect x="92" y="730" width="3" height="1" fill="#c8c8c8"/>
<rect x="1828" y="735" width="2" height="1" fill="#c8c8c8"/>
<rect x="92" y="735" width="3" height="1" fill="#c8c8c8"/>
<rect x="1828" y="739" width="2" height="1" fill="#c8c8c8"/>
<rect x="92" y="739" width="3" height="1" fill="#c8c8c8"/>
<rect x="1824" y="744" width="6" height="1" fill="#c8c8c8"/>
<rect x="92" y="744" width="6" height="1" fill="#c8c8c8"/>
<rect x="1828" y="749" width="2" height="1" fill="#c8c8c8"/>
<rect x="92" y="749" width="3" height="1" fill="#c8c8c8"/>
<rect x="1828" y="754" width="2" height="1" fill="#c8c8c8"/>
<rect x="92" y="754" width="3" height="1" fill="#c8c8c8"/>
<rect x="1828" y="758" width="2" height="1" fill="#c8c8c8"/>
<rect x="92" y="758" width="3" height="1" fill="#c8c8c8"/>
<rect x="1828" y="763" width="2" height="1" fill="#c8c8c8"/>
<rect x="92" y="763" width="3" height="1" fill="#c8c8c8"/>
<rect x="1825" y="768" width="5" height="1" fill="#c8c8c8"/>
<rect x="92" y="768" width="4" height="1" fill="#c8c8c8"/>
<rect x="1828" y="773" width="2" height="1" fill="#c8c8c8"/>
<rect x="92" y="773" width="3" height="1" fill="#c8c8c8"/>
<rect x="1828" y="777" width="2" height="1" fill="#c8c8c8"/>
<rect x="92" y="777" width="3" height="1" fill="#c8c8c8"/>
<rect x="1828" y="782" width="2" height="1" fill="#c8c8c8"/>
<rect x="92" y="782" width="3" height="1" fill="#c8c8c8"/>
<rect x="1828" y="787" width="2" height="1" fill="#c8c8c8"/>
<rect x="92" y="787" width="3" height="1" fill="#c8c8c8"/>
<rect x="1824" y="792" width="6" height="1" fill="#c8c8c8"/>
<rect x="92" y="792" width="6" height="1" fill="#c8c8c8"/>
<rect x="1828" y="796" width="2" height="1" fill="#c8c8c8"/>
<rect x="92" y="796" width="3" height="1" fill="#c8c8c8"/>
<rect x="1828" y="801" width="2" height="1" fill="#c8c8c8"/>
<rect x="92" y="801" width="3" height="1" fill="#c8c8c8"/>
<rect x="1828" y="806" width="2" height="1" fill="#c8c8c8"/>
<rect x="92" y="806" width="3" height="1" fill="#c8c8c8"/>
<rect x="1826" y="816" width="4" height="1" fill="#c8c8c8"/>
<rect x="1823" y="835" width="7" height="1" fill="#c8c8c8"/>
<rect x="1826" y="854" width="4" height="1" fill="#c8c8c8"/>
<rect x="1823" y="874" width="7" height="1" fill="#c8c8c8"/>
<rect x="1826" y="893" width="4" height="1" fill="#c8c8c8"/>
<rect x="1823" y="912" width="7" height="1" fill="#c8c8c8"/>
<rect x="1826" y="931" width="4" height="1" fill="#c8c8c8"/>
<rect x="1823" y="951" width="7" height="1" fill="#c8c8c8"/>
<rect x="1826" y="970" width="4" height="1" fill="#c8c8c8"/>
<rect x="1823" y="989" width="7" height="1" fill="#c8c8c8"/>
<rect x="92" y="829" width="3" height="1" fill="#c8c8c8"/>
<rect x="92" y="832" width="3" height="1" fill="#c8c8c8"/>
<rect x="92" y="836" width="6" height="1" fill="#c8c8c8"/>
<rect x="92" y="840" width="3" height="1" fill="#c8c8c8"/>
<rect x="92" y="844" width="3" height="1" fill="#c8c8c8"/>
<rect x="92" y="848" width="3" height="1" fill="#c8c8c8"/>
<rect x="1428" y="208" width="379" height="2" fill="#ff0000"/>
<rect x="197" y="733" width="1" height="38" fill="#d8d8d8"/>
<rect x="195" y="742" width="5" height="29" fill="#d0d0d0"/>
<rect x="196" y="743" width="3" height="27" fill="#00ff00"/>
<rect x="208" y="733" width="1" height="18" fill="#d8d8d8"/>
<rect x="206" y="742" width="5" height="3" fill="#d0d0d0"/>
<rect x="207" y="743" width="3" height="1" fill="#ff0000"/>
<rect x="219" y="735" width="1" height="26" fill="#d8d8d8"/>
<rect x="217" y="747" width="5" height="3" fill="#d0d0d0"/>
<rect x="218" y="748" width="3" height="1" fill="#ff0000"/>
<rect x="230" y="704" width="1" height="50" fill="#d8d8d8"/>
<rect x="228" y="704" width="5" height="48" fill="#d0d0d0"/>
<rect x="229" y="705" width="3" height="46" fill="#00ff00"/>
<rect x="241" y="704" width="1" height="31" fill="#d8d8d8"/>
<rect x="239" y="706" width="5" height="20" fill="#d0d0d0"/>
<rect x="240" y="707" width="3" height="18" fill="#ff0000"/>
<rect x="252" y="706" width="1" height="24" fill="#d8d8d8"/>
<rect x="250" y="714" width="5" height="10" fill="#d0d0d0"/>
<rect x="251" y="715" width="3" height="8" fill="#00ff00"/>
<rect x="263" y="709" width="1" height="16" fill="#d8d8d8"/>
<rect x="261" y="709" width="5" height="8" fill="#d0d0d0"/>
<rect x="262" y="710" width="3" height="6" fill="#00ff00"/>
<rect x="274" y="676" width="1" height="36" fill="#d8d8d8"/>
<rect x="272" y="683" width="5" height="29" fill="#d0d0d0"/>
<rect x="273" y="684" width="3" height="27" fill="#00ff00"/>
<rect x="978" y="183" width="1" height="49" fill="#d8d8d8"/>
<rect x="976" y="185" width="5" height="45" fill="#d0d0d0"/>
<rect x="977" y="186" width="3" height="43" fill="#00ff00"/>
<rect x="989" y="157" width="1" height="42" fill="#d8d8d8"/>
<rect x="987" y="161" width="5" height="23" fill="#d0d0d0"/>
<rect x="988" y="162" width="3" height="21" fill="#00ff00"/>
<rect x="1000" y="159" width="1" height="41" fill="#d8d8d8"/>
<rect x="998" y="161" width="5" height="39" fill="#d0d0d0"/>
<rect x="999" y="162" width="3" height="37" fill="#ff0000"/>
<rect x="1011" y="180" width="1" height="32" fill="#d8d8d8"/>
<rect x="1009" y="199" width="5" height="4" fill="#d0d0d0"/>
<rect x="1010" y="200" width="3" height="2" fill="#ff0000"/>
<rect x="1022" y="190" width="1" height="25" fill="#d8d8d8"/>
<rect x="1020" y="199" width="5" height="1" fill="#d8d8d8"/>
<rect x="1033" y="180" width="1" height="26" fill="#d8d8d8"/>
<rect x="1031" y="192" width="5" height="11" fill="#d0d0d0"/>
<rect x="1032" y="193" width="3" height="9" fill="#00ff00"/>
<rect x="1044" y="173" width="1" height="26" fill="#d8d8d8"/>
<rect x="1042" y="176" width="5" height="17" fill="#d0d0d0"/>
<rect x="1043" y="177" width="3" height="15" fill="#00ff00"/>
<rect x="1055" y="176" width="1" height="52" fill="#d8d8d8"/>
<rect x="1053" y="176" width="5" height="49" fill="#d0d0d0"/>
<rect x="1054" y="177" width="3" height="47" fill="#ff0000"/>
<rect x="1066" y="195" width="1" height="35" fill="#d8d8d8"/>
<rect x="1064" y="215" width="5" height="1" fill="#d8d8d8"/>
<rect x="1077" y="190" width="1" height="35" fill="#d8d8d8"/>
<rect x="1075" y="192" width="5" height="30" fill="#d0d0d0"/>
<rect x="1076" y="193" width="3" height="28" fill="#00ff00"/>
<rect x="1088" y="180" width="1" height="35" fill="#d8d8d8"/>
<rect x="1086" y="180" width="5" height="13" fill="#d0d0d0"/>
<rect x="1087" y="181" width="3" height="11" fill="#00ff00"/>
<rect x="1099" y="169" width="1" height="21" fill="#d8d8d8"/>
<rect x="1097" y="176" width="5" height="8" fill="#d0d0d0"/>
<rect x="1098" y="177" width="3" height="6" fill="#00ff00"/>
<rect x="1110" y="161" width="1" height="22" fill="#d8d8d8"/>
<rect x="1108" y="173" width="5" height="4" fill="#d0d0d0"/>
<rect x="1109" y="174" width="3" height="2" fill="#ff0000"/>
<rect x="1121" y="135" width="1" height="42" fill="#d8d8d8"/>
<rect x="1119" y="140" width="5" height="34" fill="#d0d0d0"/>
<rect x="1120" y="141" width="3" height="32" fill="#00ff00"/>
<rect x="1132" y="116" width="1" height="31" fill="#d8d8d8"/>
<rect x="1130" y="124" width="5" height="17" fill="#d0d0d0"/>
<rect x="1131" y="125" width="3" height="15" fill="#00ff00"/>
<rect x="1143" y="121" width="1" height="26" fill="#d8d8d8"/>
<rect x="1141" y="124" width="5" height="17" fill="#d0d0d0"/>
<rect x="1142" y="125" width="3" height="15" fill="#ff0000"/>
<rect x="1154" y="131" width="1" height="84" fill="#d8d8d8"/>
<rect x="1152" y="138" width="5" height="50" fill="#d0d0d0"/>
<rect x="1153" y="139" width="3" height="48" fill="#ff0000"/>
<rect x="1165" y="185" width="1" height="43" fill="#d8d8d8"/>
<rect x="1163" y="187" width="5" height="38" fill="#d0d0d0"/>
<rect x="1164" y="188" width="3" height="36" fill="#ff0000"/>
<rect x="1176" y="204" width="1" height="28" fill="#d8d8d8"/>
<rect x="1174" y="220" width="5" height="1" fill="#d8d8d8"/>
<rect x="1187" y="180" width="1" height="55" fill="#d8d8d8"/>
<rect x="1185" y="220" width="5" height="1" fill="#d8d8d8"/>
<rect x="1198" y="199" width="1" height="31" fill="#d8d8d8"/>
<rect x="1196" y="205" width="5" height="20" fill="#d0d0d0"/>
<rect x="1197" y="206" width="3" height="18" fill="#ff0000"/>
<rect x="1220" y="152" width="1" height="86" fill="#d8d8d8"/>
<rect x="1218" y="171" width="5" height="64" fill="#d0d0d0"/>
<rect x="1219" y="172" width="3" height="62" fill="#00ff00"/>
<rect x="1231" y="171" width="1" height="65" fill="#d8d8d8"/>
<rect x="1229" y="171" width="5" height="59" fill="#d0d0d0"/>
<rect x="1230" y="172" width="3" height="57" fill="#ff0000"/>
<rect x="1242" y="185" width="1" height="51" fill="#d8d8d8"/>
<rect x="1240" y="222" width="5" height="1" fill="#d8d8d8"/>
<rect x="1253" y="199" width="1" height="37" fill="#d8d8d8"/>
<rect x="1251" y="225" width="5" height="1" fill="#d8d8d8"/>
<rect x="1264" y="185" width="1" height="45" fill="#d8d8d8"/>
<rect x="1262" y="199" width="5" height="26" fill="#d0d0d0"/>
<rect x="1263" y="200" width="3" height="24" fill="#00ff00"/>
<rect x="1275" y="173" width="1" height="39" fill="#d8d8d8"/>
<rect x="1273" y="178" width="5" height="20" fill="#d0d0d0"/>
<rect x="1274" y="179" width="3" height="18" fill="#00ff00"/>
<rect x="1286" y="169" width="1" height="30" fill="#d8d8d8"/>
<rect x="1284" y="178" width="5" height="13" fill="#d0d0d0"/>
<rect x="1285" y="179" width="3" height="11" fill="#ff0000"/>
<rect x="1297" y="159" width="1" height="31" fill="#d8d8d8"/>
<rect x="1295" y="173" width="5" height="15" fill="#d0d0d0"/>
<rect x="1296" y="174" width="3" height="13" fill="#00ff00"/>
<rect x="1308" y="124" width="1" height="54" fill="#d8d8d8"/>
<rect x="1306" y="128" width="5" height="44" fill="#d0d0d0"/>
<rect x="1307" y="129" width="3" height="42" fill="#00ff00"/>
<rect x="1319" y="121" width="1" height="26" fill="#d8d8d8"/>
<rect x="1317" y="128" width="5" height="15" fill="#d0d0d0"/>
<rect x="1318" y="129" width="3" height="13" fill="#ff0000"/>
<rect x="1330" y="131" width="1" height="19" fill="#d8d8d8"/>
<rect x="1328" y="133" width="5" height="10" fill="#d0d0d0"/>
<rect x="1329" y="134" width="3" height="8" fill="#00ff00"/>
<rect x="1341" y="109" width="1" height="38" fill="#d8d8d8"/>
<rect x="1339" y="133" width="5" height="10" fill="#d0d0d0"/>
<rect x="1340" y="134" width="3" height="8" fill="#ff0000"/>
<rect x="1352" y="131" width="1" height="19" fill="#d8d8d8"/>
<rect x="1350" y="140" width="5" height="3" fill="#d0d0d0"/>
<rect x="1351" y="141" width="3" height="1" fill="#ff0000"/>
<rect x="1363" y="140" width="1" height="37" fill="#d8d8d8"/>
<rect x="1361" y="145" width="5" height="20" fill="#d0d0d0"/>
<rect x="1362" y="146" width="3" height="18" fill="#ff0000"/>
<rect x="1374" y="150" width="1" height="37" fill="#d8d8d8"/>
<rect x="1372" y="161" width="5" height="23" fill="#d0d0d0"/>
<rect x="1373" y="162" width="3" height="21" fill="#ff0000"/>
<rect x="1385" y="173" width="1" height="22" fill="#d8d8d8"/>
<rect x="1383" y="176" width="5" height="8" fill="#d0d0d0"/>
<rect x="1384" y="177" width="3" height="6" fill="#00ff00"/>
<rect x="1396" y="140" width="1" height="43" fill="#d8d8d8"/>
<rect x="1394" y="154" width="5" height="23" fill="#d0d0d0"/>
<rect x="1395" y="155" width="3" height="21" fill="#00ff00"/>
<rect x="1407" y="138" width="1" height="16" fill="#d8d8d8"/>
<rect x="1405" y="147" width="5" height="6" fill="#d0d0d0"/>
<rect x="1406" y="148" width="3" height="4" fill="#00ff00"/>
<rect x="1418" y="128" width="1" height="29" fill="#d8d8d8"/>
<rect x="1416" y="142" width="5" height="6" fill="#d0d0d0"/>
<rect x="1417" y="143" width="3" height="4" fill="#00ff00"/>
<rect x="1429" y="121" width="1" height="24" fill="#d8d8d8"/>
<rect x="1427" y="128" width="5" height="15" fill="#d0d0d0"/>
<rect x="1428" y="129" width="3" height="13" fill="#00ff00"/>
<rect x="1440" y="116" width="1" height="26" fill="#d8d8d8"/>
<rect x="1438" y="121" width="5" height="8" fill="#d0d0d0"/>
<rect x="1439" y="122" width="3" height="6" fill="#00ff00"/>
<rect x="1451" y="114" width="1" height="17" fill="#d8d8d8"/>
<rect x="1449" y="121" width="5" height="8" fill="#d0d0d0"/>
<rect x="1450" y="122" width="3" height="6" fill="#ff0000"/>
<rect x="1462" y="112" width="1" height="28" fill="#d8d8d8"/>
<rect x="1460" y="128" width="5" height="12" fill="#d0d0d0"/>
<rect x="1461" y="129" width="3" height="10" fill="#ff0000"/>
<rect x="1473" y="124" width="1" height="18" fill="#d8d8d8"/>
<rect x="1471" y="126" width="5" height="14" fill="#d0d0d0"/>
<rect x="1472" y="127" width="3" height="12" fill="#00ff00"/>
<rect x="1484" y="100" width="1" height="31" fill="#d8d8d8"/>
<rect x="1482" y="105" width="5" height="22" fill="#d0d0d0"/>
<rect x="1483" y="106" width="3" height="20" fill="#00ff00"/>
<rect x="1495" y="88" width="1" height="21" fill="#d8d8d8"/>
<rect x="1493" y="100" width="5" height="8" fill="#d0d0d0"/>
<rect x="1494" y="101" width="3" height="6" fill="#00ff00"/>
<rect x="1506" y="78" width="1" height="24" fill="#d8d8d8"/>
<rect x="1504" y="83" width="5" height="15" fill="#d0d0d0"/>
<rect x="1505" y="84" width="3" height="13" fill="#00ff00"/>
<rect x="1517" y="150" width="1" height="33" fill="#d8d8d8"/>
<rect x="1515" y="157" width="5" height="3" fill="#d0d0d0"/>
<rect x="1516" y="158" width="3" height="1" fill="#00ff00"/>
<rect x="1528" y="154" width="1" height="64" fill="#d8d8d8"/>
<rect x="1526" y="157" width="5" height="35" fill="#d0d0d0"/>
<rect x="1527" y="158" width="3" height="33" fill="#ff0000"/>
<rect x="1539" y="161" width="1" height="67" fill="#d8d8d8"/>
<rect x="1537" y="169" width="5" height="27" fill="#d0d0d0"/>
<rect x="1538" y="170" width="3" height="25" fill="#00ff00"/>
<rect x="1550" y="152" width="1" height="25" fill="#d8d8d8"/>
<rect x="1548" y="166" width="5" height="6" fill="#d0d0d0"/>
<rect x="1549" y="167" width="3" height="4" fill="#00ff00"/>
<rect x="1561" y="116" width="1" height="74" fill="#d8d8d8"/>
<rect x="1559" y="124" width="5" height="40" fill="#d0d0d0"/>
<rect x="1560" y="125" width="3" height="38" fill="#00ff00"/>
<rect x="1572" y="112" width="1" height="38" fill="#d8d8d8"/>
<rect x="1570" y="121" width="5" height="13" fill="#d0d0d0"/>
<rect x="1571" y="122" width="3" height="11" fill="#ff0000"/>
<rect x="1583" y="90" width="1" height="57" fill="#d8d8d8"/>
<rect x="1581" y="114" width="5" height="22" fill="#d0d0d0"/>
<rect x="1582" y="115" width="3" height="20" fill="#00ff00"/>
<rect x="1594" y="107" width="1" height="28" fill="#d8d8d8"/>
<rect x="1592" y="114" width="5" height="13" fill="#d0d0d0"/>
<rect x="1593" y="115" width="3" height="11" fill="#ff0000"/>
<rect x="1605" y="114" width="1" height="55" fill="#d8d8d8"/>
<rect x="1603" y="126" width="5" height="32" fill="#d0d0d0"/>
<rect x="1604" y="127" width="3" height="30" fill="#ff0000"/>
<rect x="1616" y="154" width="1" height="31" fill="#d8d8d8"/>
<rect x="1614" y="157" width="5" height="17" fill="#d0d0d0"/>
<rect x="1615" y="158" width="3" height="15" fill="#ff0000"/>
<rect x="1627" y="133" width="1" height="45" fill="#d8d8d8"/>
<rect x="1625" y="142" width="5" height="35" fill="#d0d0d0"/>
<rect x="1626" y="143" width="3" height="33" fill="#00ff00"/>
<rect x="1638" y="140" width="1" height="37" fill="#d8d8d8"/>
<rect x="1636" y="142" width="5" height="28" fill="#d0d0d0"/>
<rect x="1637" y="143" width="3" height="26" fill="#ff0000"/>
<rect x="1649" y="152" width="1" height="28" fill="#d8d8d8"/>
<rect x="1647" y="152" width="5" height="18" fill="#d0d0d0"/>
<rect x="1648" y="153" width="3" height="16" fill="#00ff00"/>
<rect x="1660" y="138" width="1" height="28" fill="#d8d8d8"/>
<rect x="1658" y="147" width="5" height="8" fill="#d0d0d0"/>
<rect x="1659" y="148" width="3" height="6" fill="#00ff00"/>
<rect x="1671" y="110" width="1" height="41" fill="#d8d8d8"/>
<rect x="1669" y="110" width="5" height="41" fill="#d0d0d0"/>
<rect x="1670" y="111" width="3" height="39" fill="#00ff00"/>
<rect x="1682" y="102" width="1" height="31" fill="#d8d8d8"/>
<rect x="1680" y="110" width="5" height="19" fill="#d0d0d0"/>
<rect x="1681" y="111" width="3" height="17" fill="#ff0000"/>
<rect x="1693" y="121" width="1" height="24" fill="#d8d8d8"/>
<rect x="1691" y="126" width="5" height="17" fill="#d0d0d0"/>
<rect x="1692" y="127" width="3" height="15" fill="#ff0000"/>
<rect x="1704" y="138" width="1" height="19" fill="#d8d8d8"/>
<rect x="1702" y="140" width="5" height="3" fill="#d0d0d0"/>
<rect x="1703" y="141" width="3" height="1" fill="#00ff00"/>
<rect x="1715" y="131" width="1" height="23" fill="#d8d8d8"/>
<rect x="1713" y="133" width="5" height="8" fill="#d0d0d0"/>
<rect x="1714" y="134" width="3" height="6" fill="#00ff00"/>
<rect x="1726" y="119" width="1" height="33" fill="#d8d8d8"/>
<rect x="1724" y="133" width="5" height="10" fill="#d0d0d0"/>
<rect x="1725" y="134" width="3" height="8" fill="#ff0000"/>
<rect x="1737" y="131" width="1" height="30" fill="#d8d8d8"/>
<rect x="1735" y="140" width="5" height="1" fill="#d8d8d8"/>
<rect x="1748" y="131" width="1" height="33" fill="#d8d8d8"/>
<rect x="1746" y="142" width="5" height="9" fill="#d0d0d0"/>
<rect x="1747" y="143" width="3" height="7" fill="#ff0000"/>
<rect x="1759" y="131" width="1" height="22" fill="#d8d8d8"/>
<rect x="1757" y="147" width="5" height="6" fill="#d0d0d0"/>
<rect x="1758" y="148" width="3" height="4" fill="#00ff00"/>
<rect x="1770" y="124" width="1" height="26" fill="#d8d8d8"/>
<rect x="1768" y="145" width="5" height="3" fill="#d0d0d0"/>
<rect x="1769" y="146" width="3" height="1" fill="#ff0000"/>
<rect x="1781" y="114" width="1" height="40" fill="#d8d8d8"/>
<rect x="1779" y="119" width="5" height="27" fill="#d0d0d0"/>
<rect x="1780" y="120" width="3" height="25" fill="#00ff00"/>
<rect x="1792" y="107" width="1" height="26" fill="#d8d8d8"/>
<rect x="1790" y="119" width="5" height="8" fill="#d0d0d0"/>
<rect x="1791" y="120" width="3" height="6" fill="#ff0000"/>
<rect x="1803" y="97" width="1" height="32" fill="#d8d8d8"/>
<rect x="1801" y="110" width="5" height="15" fill="#d0d0d0"/>
<rect x="1802" y="111" width="3" height="13" fill="#00ff00"/>
<rect x="1055" y="136" width="3" height="10" fill="#ff0000"/>
<polygon points="1051,145 1062,145 1056.5,152" fill="#ff0000" shape-rendering="auto"/>
<path d="M1051.5 160.5 L1061.5 170.5 M1061.5 160.5 L1051.5 170.5" stroke="#0000ff" stroke-width="1.6" shape-rendering="auto"/>
<rect x="108" y="826" width="2" height="24" fill="#009400"/>
<rect x="119" y="826" width="2" height="24" fill="#009400"/>
<rect x="130" y="826" width="2" height="24" fill="#009400"/>
<rect x="141" y="826" width="2" height="24" fill="#009400"/>
<rect x="152" y="824" width="2" height="26" fill="#009400"/>
<rect x="163" y="824" width="2" height="26" fill="#009400"/>
<rect x="174" y="824" width="2" height="26" fill="#009400"/>
<rect x="185" y="824" width="2" height="26" fill="#009400"/>
<rect x="196" y="824" width="2" height="26" fill="#009400"/>
<rect x="207" y="824" width="2" height="26" fill="#009400"/>
<rect x="218" y="824" width="2" height="26" fill="#009400"/>
<rect x="229" y="824" width="2" height="26" fill="#009400"/>
<rect x="240" y="824" width="2" height="26" fill="#009400"/>
<rect x="251" y="824" width="2" height="26" fill="#009400"/>
<rect x="262" y="824" width="2" height="26" fill="#009400"/>
<rect x="273" y="824" width="2" height="26" fill="#009400"/>
<rect x="109" y="825" width="8" height="1" fill="#ffff00"/>
<rect x="845" y="913" width="2" height="69" fill="#9c0000"/>
<rect x="856" y="913" width="2" height="69" fill="#9c0000"/>
<rect x="867" y="913" width="2" height="69" fill="#9c0000"/>
<rect x="878" y="913" width="2" height="69" fill="#9c0000"/>
<rect x="889" y="913" width="2" height="69" fill="#9c0000"/>
<rect x="900" y="913" width="2" height="69" fill="#9c0000"/>
<rect x="911" y="913" width="2" height="69" fill="#9c0000"/>
<rect x="922" y="913" width="2" height="69" fill="#9c0000"/>
<rect x="933" y="913" width="2" height="69" fill="#9c0000"/>
<rect x="944" y="913" width="2" height="69" fill="#9c0000"/>
<rect x="955" y="913" width="2" height="69" fill="#9c0000"/>
<rect x="966" y="913" width="2" height="69" fill="#9c0000"/>
<rect x="977" y="913" width="2" height="69" fill="#9c0000"/>
<rect x="988" y="913" width="2" height="69" fill="#9c0000"/>
<rect x="999" y="913" width="2" height="69" fill="#9c0000"/>
<rect x="1010" y="913" width="2" height="69" fill="#9c0000"/>
<rect x="1021" y="913" width="2" height="69" fill="#9c0000"/>
<rect x="1032" y="913" width="2" height="69" fill="#9c0000"/>
<rect x="1043" y="913" width="2" height="69" fill="#9c0000"/>
<rect x="1054" y="913" width="2" height="34" fill="#9c0000"/>
<rect x="1065" y="913" width="2" height="34" fill="#9c0000"/>
<rect x="1076" y="913" width="2" height="34" fill="#9c0000"/>
<rect x="1087" y="913" width="2" height="34" fill="#9c0000"/>
<rect x="1098" y="913" width="2" height="34" fill="#9c0000"/>
<rect x="1109" y="913" width="2" height="34" fill="#9c0000"/>
<rect x="1120" y="913" width="2" height="34" fill="#9c0000"/>
<rect x="1131" y="913" width="2" height="34" fill="#9c0000"/>
<rect x="1142" y="913" width="2" height="34" fill="#9c0000"/>
<rect x="1153" y="913" width="2" height="34" fill="#9c0000"/>
<rect x="1164" y="913" width="2" height="34" fill="#9c0000"/>
<rect x="1175" y="913" width="2" height="34" fill="#9c0000"/>
<rect x="1186" y="913" width="2" height="34" fill="#9c0000"/>
<rect x="1197" y="913" width="2" height="34" fill="#9c0000"/>
<rect x="1208" y="913" width="2" height="34" fill="#9c0000"/>
<rect x="1219" y="913" width="2" height="34" fill="#9c0000"/>
<rect x="1230" y="913" width="2" height="34" fill="#9c0000"/>
<rect x="1241" y="913" width="2" height="34" fill="#9c0000"/>
<rect x="1252" y="913" width="2" height="34" fill="#9c0000"/>
<rect x="1263" y="913" width="2" height="34" fill="#9c0000"/>
<rect x="1274" y="913" width="2" height="34" fill="#9c0000"/>
<rect x="1285" y="913" width="2" height="34" fill="#9c0000"/>
<rect x="1296" y="913" width="2" height="34" fill="#9c0000"/>
<rect x="1307" y="913" width="2" height="34" fill="#9c0000"/>
<rect x="1318" y="913" width="2" height="34" fill="#9c0000"/>
<rect x="1329" y="913" width="2" height="34" fill="#9c0000"/>
<rect x="1340" y="913" width="2" height="34" fill="#9c0000"/>
<rect x="1351" y="913" width="2" height="34" fill="#9c0000"/>
<rect x="1362" y="913" width="2" height="34" fill="#9c0000"/>
<rect x="1373" y="913" width="2" height="34" fill="#9c0000"/>
<rect x="1384" y="913" width="2" height="34" fill="#9c0000"/>
<rect x="1395" y="913" width="2" height="34" fill="#9c0000"/>
<rect x="1406" y="913" width="2" height="34" fill="#9c0000"/>
<rect x="1417" y="913" width="2" height="34" fill="#9c0000"/>
<rect x="1428" y="913" width="2" height="34" fill="#9c0000"/>
<rect x="1439" y="913" width="2" height="34" fill="#9c0000"/>
<rect x="1450" y="913" width="2" height="34" fill="#9c0000"/>
<rect x="1461" y="913" width="2" height="34" fill="#9c0000"/>
<rect x="1472" y="913" width="2" height="34" fill="#9c0000"/>
<rect x="1483" y="913" width="2" height="34" fill="#9c0000"/>
<rect x="1494" y="913" width="2" height="34" fill="#9c0000"/>
<rect x="1505" y="913" width="2" height="34" fill="#9c0000"/>
<rect x="1516" y="913" width="2" height="34" fill="#9c0000"/>
<rect x="1527" y="913" width="2" height="34" fill="#9c0000"/>
<rect x="1538" y="913" width="2" height="34" fill="#9c0000"/>
<rect x="1549" y="913" width="2" height="34" fill="#9c0000"/>
<rect x="1560" y="913" width="2" height="34" fill="#9c0000"/>
<rect x="1571" y="913" width="2" height="34" fill="#9c0000"/>
<rect x="1582" y="913" width="2" height="34" fill="#9c0000"/>
<rect x="1593" y="913" width="2" height="34" fill="#9c0000"/>
<rect x="1604" y="913" width="2" height="34" fill="#9c0000"/>
<rect x="1615" y="913" width="2" height="34" fill="#9c0000"/>
<rect x="1626" y="913" width="2" height="34" fill="#9c0000"/>
<rect x="1637" y="913" width="2" height="34" fill="#9c0000"/>
<rect x="1648" y="913" width="2" height="34" fill="#9c0000"/>
<rect x="1659" y="913" width="2" height="34" fill="#9c0000"/>
<rect x="1670" y="913" width="2" height="34" fill="#9c0000"/>
<rect x="1681" y="913" width="2" height="34" fill="#9c0000"/>
<rect x="1692" y="913" width="2" height="34" fill="#9c0000"/>
<rect x="1703" y="913" width="2" height="34" fill="#9c0000"/>
<rect x="1714" y="913" width="2" height="34" fill="#9c0000"/>
<rect x="1725" y="913" width="2" height="34" fill="#9c0000"/>
<rect x="1736" y="913" width="2" height="34" fill="#9c0000"/>
<rect x="1747" y="913" width="2" height="34" fill="#9c0000"/>
<rect x="1758" y="913" width="2" height="34" fill="#9c0000"/>
<rect x="1769" y="913" width="2" height="34" fill="#9c0000"/>
<rect x="1780" y="913" width="2" height="34" fill="#9c0000"/>
<rect x="1791" y="913" width="2" height="34" fill="#9c0000"/>
<rect x="1802" y="913" width="2" height="34" fill="#9c0000"/>
<polyline points="545.3,985.9 560.2,983.1 581.9,995 593.8,989.3 604.8,992.7 616.2,999.6 626.5,997.3 637.2,1004.1 648.6,996.1 658.9,1001.2 669.2,999.6 680.6,1000.3 693.2,1006.9 703.5,1006 713.8,1006.9 724.1,1004.6 736.7,999.6 745.8,998 758.4,987 768.7,990 780.1,990 791.6,981.3 801.8,985.2 813.3,976.7 824.7,981.3 835,977.2 845.3,981.3 856.7,975.6 868.2,979.5 878.5,980.6 889.9,989.3 901.3,995 911.6,988.6 923.1,960 934.5,960.7 945,955 955,951 965.7,948.1 988.5,936.7 999.9,944.4 1022.7,944.4 1044.1,939.6 1055.5,946.1 1066,946.1 1076.9,949.5 1098.3,952.4 1110.5,952.4 1121,959.5 1131.9,962.9 1142.4,960.4 1153.8,951 1165.2,943.8 1175.8,940.1 1187.2,946.1 1198,940.1 1209.4,945.3 1220,953.8 1230.8,943.3 1242.2,944.7 1253,943 1263.6,947.5 1275,952.4 1286.4,951 1296.4,953 1309.2,962.4 1319.7,959.5 1330.6,961.5 1342,960.1 1353.4,959.5 1374.8,951.5 1384.7,951.8 1396.1,957.2 1417.5,959 1429,961.8 1439.5,963.6 1446,963 1461.5,960 1473.2,963 1483.6,967 1495.3,968.3 1506.2,971.6 1517.4,956 1528.5,949.3 1539.4,954.5 1549.8,954.5 1561.5,963.6 1571.9,961.8 1583.6,965.7 1594,963.6 1605.7,956.6 1616,953.5 1627.7,959.7 1638.1,954.5 1648.5,957.1 1660.2,958.7 1671.4,966.4 1682.3,961.8 1692.7,959.2 1704.3,959.7 1714.7,961.3 1726.4,959.2 1736.8,960 1747.7,958.4 1769.3,958.4 1780.9,964.4 1791.3,963 1803.8,966.4" fill="none" stroke="#ff0000" stroke-width="1.05" shape-rendering="auto"/>
<rect x="325" y="1020" width="296" height="2" fill="#ffffff"/>
<rect x="621" y="1020" width="296" height="2" fill="#00ff00"/>
<rect x="917" y="1020" width="297" height="2" fill="#ff0000"/>
<rect x="1214" y="1020" width="297" height="2" fill="#0000ff"/>
<rect x="1810" y="1020" width="9" height="2" fill="#ffffff"/>
<rect x="1832" y="101" width="74" height="15" fill="#c8c8c8"/>
<rect x="1832" y="938" width="74" height="15" fill="#0a8c0a" stroke="#8fc88f" stroke-width="1"/>
<rect x="1832" y="958" width="74" height="15" fill="#00ff00"/>
<g font-family="'DejaVu Sans Mono','Liberation Mono',monospace" font-size="12.6" fill="#ffff00" letter-spacing="0.21" shape-rendering="auto" text-rendering="geometricPrecision">
<text x="1904" y="83.9" text-anchor="end">1960.00</text>
<text x="1904" y="131.3" text-anchor="end">1955.00</text>
<text x="1904" y="178.7" text-anchor="end">1950.00</text>
<text x="1904" y="226.0" text-anchor="end">1945.00</text>
<text x="1904" y="273.4" text-anchor="end">1940.00</text>
<text x="1904" y="320.8" text-anchor="end">1935.00</text>
<text x="1904" y="368.2" text-anchor="end">1930.00</text>
<text x="1904" y="415.6" text-anchor="end">1925.00</text>
<text x="1904" y="462.9" text-anchor="end">1920.00</text>
<text x="1904" y="510.3" text-anchor="end">1915.00</text>
<text x="1904" y="557.7" text-anchor="end">1910.00</text>
<text x="1904" y="605.1" text-anchor="end">1905.00</text>
<text x="1904" y="652.5" text-anchor="end">1900.00</text>
<text x="1904" y="699.8" text-anchor="end">1895.00</text>
<text x="1904" y="747.2" text-anchor="end">1890.00</text>
<text x="1904" y="794.6" text-anchor="end">1885.00</text>
<text x="1904" y="839.1" text-anchor="end">2000</text>
<text x="1904" y="878.1" text-anchor="end">1000</text>
<text x="1904" y="916.1" text-anchor="end">0</text>
<text x="1904" y="993.1" text-anchor="end">-2000</text>
<text x="1904" y="112.6" text-anchor="end" fill="#000">1957.00</text>
<text x="1904" y="949" text-anchor="end" fill="#f0f0f0">-850</text>
<text x="1904" y="969" text-anchor="end" fill="#222">-1375</text>
<rect x="120" y="1023" width="1" height="13" fill="#ffff00" shape-rendering="crispEdges"/>
<text x="123" y="1034">10:30</text>
<rect x="208" y="1023" width="1" height="13" fill="#ffff00" shape-rendering="crispEdges"/>
<text x="211" y="1034">12:30</text>
<rect x="329" y="1023" width="1" height="13" fill="#ffff00" shape-rendering="crispEdges"/>
<text x="332" y="1034">21-08:30</text>
<rect x="417" y="1023" width="1" height="13" fill="#ffff00" shape-rendering="crispEdges"/>
<text x="420" y="1034">10:30</text>
<rect x="505" y="1023" width="1" height="13" fill="#ffff00" shape-rendering="crispEdges"/>
<text x="508" y="1034">12:30</text>
<rect x="626" y="1023" width="1" height="13" fill="#ffff00" shape-rendering="crispEdges"/>
<text x="629" y="1034">22-08:30</text>
<rect x="714" y="1023" width="1" height="13" fill="#ffff00" shape-rendering="crispEdges"/>
<text x="717" y="1034">10:30</text>
<rect x="802" y="1023" width="1" height="13" fill="#ffff00" shape-rendering="crispEdges"/>
<text x="805" y="1034">12:30</text>
<rect x="923" y="1023" width="1" height="13" fill="#ffff00" shape-rendering="crispEdges"/>
<text x="926" y="1034">23-08:30</text>
<rect x="1011" y="1023" width="1" height="13" fill="#ffff00" shape-rendering="crispEdges"/>
<text x="1014" y="1034">10:30</text>
<rect x="1099" y="1023" width="1" height="13" fill="#ffff00" shape-rendering="crispEdges"/>
<text x="1102" y="1034">12:30</text>
<rect x="1220" y="1023" width="1" height="13" fill="#ffff00" shape-rendering="crispEdges"/>
<text x="1223" y="1034">24-08:30</text>
<rect x="1308" y="1023" width="1" height="13" fill="#ffff00" shape-rendering="crispEdges"/>
<text x="1311" y="1034">10:30</text>
<rect x="1396" y="1023" width="1" height="13" fill="#ffff00" shape-rendering="crispEdges"/>
<text x="1399" y="1034">12:30</text>
<rect x="1517" y="1023" width="1" height="13" fill="#ffff00" shape-rendering="crispEdges"/>
<text x="1520" y="1034">27-08:30</text>
<rect x="1605" y="1023" width="1" height="13" fill="#ffff00" shape-rendering="crispEdges"/>
<text x="1608" y="1034">10:30</text>
<rect x="1693" y="1023" width="1" height="13" fill="#ffff00" shape-rendering="crispEdges"/>
<text x="1696" y="1034">27-12:30</text>
<text x="93" y="76.0">O=</text>
<text x="93" y="88.7">H=</text>
<text x="93" y="101.3">L=</text>
<text x="93" y="114.0">L=</text>
<text x="93" y="126.6">Δ=</text>
<text x="177" y="76" font-weight="bold" letter-spacing="1.37" font-size="12.8">OrderDis, TS_SSK^</text>
<rect x="91.5" y="727.5" width="99" height="83" fill="#000" stroke="#808080" stroke-width="1" shape-rendering="crispEdges"/>
<text x="94" y="738.8">10-27-14</text>
<text x="94" y="752.4">15:00</text>
<text x="94" y="766.0">O=</text><text x="189" y="766.0" text-anchor="end">1955.50</text>
<text x="94" y="779.6">H=</text><text x="189" y="779.6" text-anchor="end">1958.25</text>
<text x="94" y="793.2">L=</text><text x="189" y="793.2" text-anchor="end">1955.00</text>
<text x="94" y="806.8">C=</text><text x="189" y="806.8" text-anchor="end">1957.00</text>
<text x="94" y="823">TS_SSK^</text>
<rect x="91.5" y="850.5" width="453" height="169" fill="#000" stroke="#808080" stroke-width="1" shape-rendering="crispEdges"/>
<text x="93" y="861.6" xml:space="preserve" letter-spacing="0.43">TotalNetProfit =</text><text x="309" y="861.6" text-anchor="end">-1375</text>
<text x="311" y="861.6" xml:space="preserve" letter-spacing="0.43">LongestFlat    =</text><text x="543" y="861.6" text-anchor="end">27</text>
<text x="93" y="875.6" xml:space="preserve" letter-spacing="0.43">ClosedNetProfit=</text><text x="309" y="875.6" text-anchor="end">-850</text>
<text x="311" y="875.6" xml:space="preserve" letter-spacing="0.43">ProfitFactor   =</text><text x="543" y="875.6" text-anchor="end">0.55</text>
<text x="93" y="889.7" xml:space="preserve" letter-spacing="0.43">TotalTradeCount=</text><text x="309" y="889.7" text-anchor="end">23</text>
<text x="311" y="889.7" xml:space="preserve" letter-spacing="0.43">MaxConsecWins  =</text><text x="543" y="889.7" text-anchor="end">3</text>
<text x="93" y="903.7" xml:space="preserve" letter-spacing="0.43">OpenPosition   =</text><text x="309" y="903.7" text-anchor="end">-1</text>
<text x="311" y="903.7" xml:space="preserve" letter-spacing="0.43">MaxConsecLosses=</text><text x="543" y="903.7" text-anchor="end">4</text>
<text x="93" y="917.7" xml:space="preserve" letter-spacing="0.43">PercentLong    =</text><text x="309" y="917.7" text-anchor="end">48</text>
<text x="311" y="917.7" xml:space="preserve" letter-spacing="0.43">AvgTimeInTrade =</text><text x="543" y="917.7" text-anchor="end">10.4</text>
<text x="93" y="931.8" xml:space="preserve" letter-spacing="0.43">AverageDuration=</text><text x="309" y="931.8" text-anchor="end">11</text>
<text x="311" y="931.8" xml:space="preserve" letter-spacing="0.43">AvgBarsInWin   =</text><text x="543" y="931.8" text-anchor="end">12</text>
<text x="93" y="945.8" xml:space="preserve" letter-spacing="0.43">AverageProfit  =</text><text x="309" y="945.8" text-anchor="end">-37</text>
<text x="311" y="945.8" xml:space="preserve" letter-spacing="0.43">AvgBarsInLoss  =</text><text x="543" y="945.8" text-anchor="end">9</text>
<text x="93" y="959.8" xml:space="preserve" letter-spacing="0.43">AverageWin     =</text><text x="309" y="959.8" text-anchor="end">991</text>
<text x="311" y="959.8" xml:space="preserve" letter-spacing="0.43">ProfitLossRatio=</text><text x="543" y="959.8" text-anchor="end">1.18</text>
<text x="93" y="973.8" xml:space="preserve" letter-spacing="0.43">MaximumWin     =</text><text x="309" y="973.8" text-anchor="end">2925</text>
<text x="311" y="973.8" xml:space="preserve" letter-spacing="0.43">PercentWinners =</text><text x="543" y="973.8" text-anchor="end">56.52</text>
<text x="93" y="987.9" xml:space="preserve" letter-spacing="0.43">AverageLoss    =</text><text x="309" y="987.9" text-anchor="end">-1109</text>
<text x="311" y="987.9" xml:space="preserve" letter-spacing="0.43">RemoveToNeutral=</text><text x="543" y="987.9" text-anchor="end">0.00</text>
<text x="93" y="1001.9" xml:space="preserve" letter-spacing="0.43">MaximumLoss    =</text><text x="309" y="1001.9" text-anchor="end">-4075</text>
<text x="311" y="1001.9" xml:space="preserve" letter-spacing="0.43">TimePercentage =</text><text x="543" y="1001.9" text-anchor="end">97.10</text>
<text x="93" y="1015.9" xml:space="preserve" letter-spacing="0.43">MaxClosedDraw  =</text><text x="309" y="1015.9" text-anchor="end">-4075</text>
<text x="311" y="1015.9" xml:space="preserve" letter-spacing="0.43">CurDrawDown    =</text><text x="543" y="1015.9" text-anchor="end">-4412</text>
</g>
</svg>
<div class="snap" style="left:1440px;width:167px;background:linear-gradient(#00b400,#00a000 50%,#0a8c0a)"><div class="abs" style="left:19px;top:2px;width:1px;height:84px;background:#034a03;opacity:.45"></div><div class="abs" style="left:2px;top:86px;width:163px;height:1px;background:#034a03;opacity:.6"></div><div class="abs" style="left:2px;top:24px;width:16px;text-align:center;font-size:15px;line-height:16px;color:#034a03">M</div><div class="abs" style="left:2px;top:39px;width:16px;text-align:center;font-size:15px;line-height:16px;color:#034a03">K</div><div class="abs" style="left:2px;top:54px;width:16px;text-align:center;font-size:15px;line-height:16px;color:#034a03">T</div><div class="abs" style="left:62px;top:4px;width:60px;text-align:center;color:#fff;font-size:16.5px;line-height:16px;letter-spacing:-0.4px;text-shadow:0 0 0.5px #fff">195</div><div class="abs" style="left:32px;top:13px;width:110px;margin-left:-22px;text-align:right;color:#fff;font-weight:bold;font-size:80px;line-height:84px;letter-spacing:2px;transform:scaleX(.925);transform-origin:right">75</div><div class="abs" style="left:118px;top:20px;margin-left:-1px;color:#fff;font-weight:bold;font-size:37.5px;line-height:40px;transform:scaleX(1.02);transform-origin:left">0</div><div class="abs" style="left:0;top:88px;width:167px;text-align:center;font-size:17px;line-height:18px;letter-spacing:-0.2px;color:#034a03">JOIN BID</div></div><div class="snap" style="left:1608px;width:167px;background:linear-gradient(#ff0606,#ee0000 50%,#d00000)"><div class="abs" style="left:147px;top:2px;width:1px;height:84px;background:#6e0000;opacity:.45"></div><div class="abs" style="left:2px;top:86px;width:163px;height:1px;background:#6e0000;opacity:.6"></div><div class="abs" style="left:149px;top:24px;width:16px;text-align:center;font-size:15px;line-height:16px;color:#6e0000">M</div><div class="abs" style="left:149px;top:39px;width:16px;text-align:center;font-size:15px;line-height:16px;color:#6e0000">K</div><div class="abs" style="left:149px;top:54px;width:16px;text-align:center;font-size:15px;line-height:16px;color:#6e0000">T</div><div class="abs" style="left:44px;top:4px;width:60px;text-align:center;color:#fff;font-size:16.5px;line-height:16px;letter-spacing:-0.4px;text-shadow:0 0 0.5px #fff">195</div><div class="abs" style="left:14px;top:13px;width:110px;margin-left:-22px;text-align:right;color:#fff;font-weight:bold;font-size:80px;line-height:84px;letter-spacing:2px;transform:scaleX(.925);transform-origin:right">75</div><div class="abs" style="left:100px;top:20px;margin-left:-1px;color:#fff;font-weight:bold;font-size:37.5px;line-height:40px;transform:scaleX(1.02);transform-origin:left">0</div><div class="abs" style="left:0;top:88px;width:167px;text-align:center;font-size:17px;line-height:18px;letter-spacing:-0.2px;color:#6e0000">JOIN ASK</div></div>
<div class="abs" style="left:1509px;top:616px;width:224px;height:123px;border:1px solid #ffff00;background:#000"></div><div class="abs" style="left:1509px;top:635px;width:224px;height:1px;background:#ffff00"></div><div class="ob" style="left:1513px;top:618.5px">Order Book</div><div class="ob" style="left:1693px;top:619px;font-size:10.5px;letter-spacing:0">CLOSE</div><div class="ob" style="left:1514px;top:641.5px">PSspread300</div><div class="ob" style="left:1514px;top:657.7px">Long 10 @ 1839.75</div><div class="ob" style="left:1514px;top:689.5px">OTE: 58,875.00</div><div class="ob" style="left:1514px;top:712px;font-weight:bold;font-size:16.4px;line-height:18px">No working orders</div><div class="ob" style="left:1679px;top:714px">X All (0)</div>
<div class="dlg" style="left:282px;top:116px;width:682px;height:842px;background:linear-gradient(115deg,#3b4659 0%,#2a364c 6%,#12203a 16%,#0b1730 30%,#0d1932 44%,#1c2a44 52%,#111e38 60%,#0b162e 72%,#1a2640 84%,#2d3a50 93%,#1e2c42 100%)"></div><div class="abs" style="left:283px;top:150px;width:680px;height:807px;background:#0c1426;border-radius:0 0 6px 6px"></div><div class="abs" style="left:284px;top:150px;width:2px;height:805px;background:#3a4a78;opacity:.25"></div><div class="abs" style="left:959px;top:150px;width:2px;height:805px;background:#3a4a78;opacity:.2"></div><div class="dlgtitle" style="left:290px;top:125px">Formula Builder</div><div class="dclose" style="left:897px;top:117px;width:61px;height:24px"><svg width="16" height="13" viewBox="0 0 16 13" style="position:absolute;left:22px;top:4px"><path d="M2 1.5 L14 11.5 M14 1.5 L2 11.5" stroke="#3a4050" stroke-width="4.4"/><path d="M2 1.5 L14 11.5 M14 1.5 L2 11.5" stroke="#fff" stroke-width="2.6"/></svg></div><div class="client" style="left:288px;top:149px;width:669px;height:802px"></div><div class="ui" style="left:299px;top:162px;width:73px;height:25px;border:1px solid #898c95;border-bottom:none;background:linear-gradient(#f2f2f2,#ebebeb 50%,#dddddd 50%,#cfcfcf);text-align:center;line-height:25px;font-size:12.6px">QFormulas</div><div class="ui" style="left:373px;top:162px;width:70px;height:25px;border:1px solid #898c95;border-bottom:none;background:linear-gradient(#f2f2f2,#ebebeb 50%,#dddddd 50%,#cfcfcf);text-align:center;line-height:25px;font-size:12.6px">Conditions</div><div class="ui" style="left:444px;top:162px;width:78px;height:25px;border:1px solid #898c95;border-bottom:none;background:linear-gradient(#f2f2f2,#ebebeb 50%,#dddddd 50%,#cfcfcf);text-align:center;line-height:25px;font-size:12.6px">User Values</div><div class="ui" style="left:626px;top:162px;width:95px;height:25px;border:1px solid #898c95;border-bottom:none;background:linear-gradient(#f2f2f2,#ebebeb 50%,#dddddd 50%,#cfcfcf);text-align:center;line-height:25px;font-size:12.6px">Trade Systems</div><div class="abs" style="left:297px;top:186px;width:650px;height:720px;background:#fff;border:1px solid #898c95"></div><div class="ui" style="left:522px;top:159px;width:105px;height:28px;border:1px solid #898c95;border-bottom:none;background:#fff;text-align:center;line-height:27px;font-size:12.6px">Custom Studies</div><div class="abs" style="left:308px;top:198px;width:280px;height:24px;border:1px solid #707070;border-radius:3px;background:linear-gradient(#f2f2f2,#ebebeb 48%,#dddddd 52%,#cfcfcf);box-shadow:inset 0 0 0 1px #fcfcfc"></div><div class="ui" style="left:312px;top:204px;font-size:12.6px">All Folders</div><div class="abs" style="left:573px;top:208.5px;width:0;height:0;border-left:4px solid transparent;border-right:4px solid transparent;border-top:4px solid #000"></div><div class="inp" style="left:595px;top:198px;width:280px;height:26px;border-color:#d9dde3;border-radius:2px"></div><div class="ui" style="left:602px;top:205px;font-style:italic;color:#6d6d6d;font-size:12.6px">Search for Study</div><svg class="abs" width="12" height="12" viewBox="0 0 12 12" style="left:856px;top:205px"><circle cx="7" cy="4.6" r="3.2" fill="none" stroke="#666" stroke-width="1.4"/><path d="M4.8 7 L1.2 10.8" stroke="#666" stroke-width="1.8"/></svg><div class="abs" style="left:308px;top:234px;width:373px;height:269px;border:1px solid #828790;background:#fff;overflow:hidden"><div class="abs" style="left:0;top:0;width:350px;height:25px;background:#f0f0f0;border-bottom:1px dotted #000"></div><div class="ui" style="left:0;top:5px;width:166px;text-align:center;font-weight:bold;font-size:12.8px;color:#333">Name</div><div class="abs" style="left:163.5px;top:11.75px;width:0;height:0;border-left:3.5px solid transparent;border-right:3.5px solid transparent;border-top:3.5px solid #333"></div><div class="ui" style="left:175px;top:5px;width:60px;text-align:center;font-weight:bold;font-size:12.8px;color:#333">MarkIt</div><div class="abs" style="left:174px;top:1px;width:1px;height:24px;border-left:1px dotted #000"></div><div class="abs" style="left:235px;top:1px;width:1px;height:24px;border-left:1px dotted #000"></div><div class="trow" style="top:25px"><span style="left:5px">CorEURUSD</span><div class="abs" style="left:174px;top:0;width:62px;height:24px;border-left:1px dotted #9a9a9a;border-right:1px dotted #9a9a9a"><div class="hatch"></div></div><span style="left:240px"></span></div><div class="trow" style="top:49px"><span style="left:5px">Corr</span><div class="abs" style="left:174px;top:0;width:62px;height:24px;border-left:1px dotted #9a9a9a;border-right:1px dotted #9a9a9a"><div class="hatch"></div></div><span style="left:240px"></span></div><div class="trow" style="top:73px"><span style="left:5px">CorrTest</span><div class="abs" style="left:174px;top:0;width:62px;height:24px;border-left:1px dotted #9a9a9a;border-right:1px dotted #9a9a9a"><div class="hatch"></div></div><span style="left:240px"></span></div><div class="trow" style="top:97px"><span style="left:5px">cqg.Bid_Ask</span><div class="abs" style="left:174px;top:0;width:62px;height:24px;border-left:1px dotted #9a9a9a;border-right:1px dotted #9a9a9a"><div class="hatch"></div></div><span style="left:240px">Bid and Ask Price Lines</span></div><div class="trow" style="top:121px"><span style="left:5px">cqg.Correl.CL</span><div class="abs" style="left:174px;top:0;width:62px;height:24px;border-left:1px dotted #9a9a9a;border-right:1px dotted #9a9a9a"><div class="hatch"></div></div><span style="left:240px">Correlation to crude oil</span></div><div class="trow" style="top:145px"><span style="left:5px">cqg.Correl.CP</span><div class="abs" style="left:174px;top:0;width:62px;height:24px;border-left:1px dotted #9a9a9a;border-right:1px dotted #9a9a9a"><div class="hatch"></div></div><span style="left:240px">Correlation to copper</span></div><div class="trow" style="top:169px"><span style="left:5px">cqg.Correl.EQ</span><div class="abs" style="left:174px;top:0;width:62px;height:24px;border-left:1px dotted #9a9a9a;border-right:1px dotted #9a9a9a"><div class="hatch"></div></div><span style="left:240px">Correlation to three equity</span></div><div class="trow" style="top:193px;background:#f3f3f7"><span style="left:5px">cqg.Correl.FX</span><div class="abs" style="left:174px;top:0;width:62px;height:24px;border-left:1px dotted #9a9a9a;border-right:1px dotted #9a9a9a"><div class="hatch"></div></div><span style="left:240px">Correlation to the Dollar</span></div><div class="trow" style="top:217px"><span style="left:5px">cqg.Correl.MA</span><div class="abs" style="left:174px;top:0;width:62px;height:24px;border-left:1px dotted #9a9a9a;border-right:1px dotted #9a9a9a"><div class="hatch"></div></div><span style="left:240px">Correlation between two</span></div><div class="trow" style="top:241px"><span style="left:5px">cqg.Correl.TY</span><div class="abs" style="left:174px;top:0;width:62px;height:24px;border-left:1px dotted #9a9a9a;border-right:1px dotted #9a9a9a"><div class="hatch"></div></div><span style="left:240px">Correlation to notes</span></div><div class="sbtrack" style="left:350px;top:0;width:21px;height:246px;background:linear-gradient(90deg,#e4e4e4,#f2f2f2 40%,#f4f4f4)"></div><div class="abs" style="left:356px;top:9.0px;width:0;height:0;border-left:4px solid transparent;border-right:4px solid transparent;border-bottom:4px solid #404040"></div><div class="abs" style="left:356px;top:231.5px;width:0;height:0;border-left:4px solid transparent;border-right:4px solid transparent;border-top:4px solid #606060"></div><div class="thumb" style="left:351px;top:66px;width:18px;height:19px"><div class="abs" style="left:4px;top:4px;width:8px;height:1px;background:#666;box-shadow:0 3px 0 #666,0 6px 0 #666,0 9px 0 #666"></div></div><div class="sbtrack" style="left:0;top:246px;width:371px;height:21px"></div><div class="abs" style="left:8.0px;top:252px;width:0;height:0;border-top:4px solid transparent;border-bottom:4px solid transparent;border-right:4px solid #404040"></div><div class="abs" style="left:336.0px;top:252px;width:0;height:0;border-top:4px solid transparent;border-bottom:4px solid transparent;border-left:4px solid #404040"></div><div class="thumbh" style="left:23px;top:248px;width:75px;height:17px"><div class="abs" style="left:31px;top:4px;width:1px;height:8px;background:#555;box-shadow:3px 0 0 #555,6px 0 0 #555"></div></div></div><div class="btn " style="left:689px;top:235px;width:45px;height:26px;line-height:25px">New</div><div class="btn " style="left:689px;top:271px;width:45px;height:26px;line-height:25px">Copy</div><div class="btn dis" style="left:689px;top:309px;width:45px;height:26px;line-height:25px">Del</div><div class="btn dis" style="left:689px;top:347px;width:45px;height:26px;line-height:25px">Parm</div><div class="abs" style="left:744px;top:234px;width:138px;height:269px;border:1px solid #828790;background:#fff;overflow:hidden"><div class="abs" style="left:0;top:0;width:136px;height:25px;background:#f0f0f0"></div><div class="abs" style="left:2px;top:24px;width:132px;border-bottom:1px dotted #000"></div><div class="ui" style="left:0;top:5px;width:136px;text-align:center;font-weight:bold;font-size:12.8px;color:#333">Curve Name</div><div class="trow" style="left:2px;width:132px;top:25px;background:#f5f5f6"><span style="left:3px">DXC</span></div><div class="trow" style="left:2px;width:132px;top:49px"><span style="left:3px">EUR</span></div><div class="trow" style="left:2px;width:132px;top:73px"><span style="left:3px">JPY</span></div></div><div class="btn dis" style="left:892px;top:235px;width:45px;height:26px;line-height:25px">New</div><div class="btn dis" style="left:892px;top:271px;width:45px;height:26px;line-height:25px">Copy</div><div class="btn dis" style="left:892px;top:309px;width:45px;height:26px;line-height:25px">Del</div><div class="ui" style="left:308px;top:516px">Abbreviation:</div><div class="inp" style="left:392px;top:511px;width:103px;height:24px;border-color:#d9dde3;border-radius:2px;padding:4px 0 0 5px">CorrFX</div><div class="chk" style="left:518px;top:517px"></div><div class="ui" style="left:537px;top:518px">Overlaid</div><div class="chk" style="left:606px;top:517px"></div><div class="ui" style="left:625px;top:518px">Toolbar Button</div><div class="abs" style="left:308px;top:546px;width:630px;height:1px;background:#a0a0a0"></div><div class="ui" style="left:308px;top:560px;font-weight:bold;font-size:12.6px;letter-spacing:-0.2px">CorrFX.DXC^</div><div class="abs" style="left:308px;top:583px;width:630px;height:234px;background:#f0f0f0;border:1px solid #e3e9ef;border-top-color:#abadb3"></div><div class="code" style="left:311px;top:587.5px"> /*
This Custom Study graphs the correlation between the active
instrument and DXC, EUR and JPY over a user specified period.
Period is a parameter defined in [Parms..] so that it may be
modified by the user.
*/

<span style="color:#1d3f7e">Correlation</span><span style="color:#3c3c3c;font-weight:normal">(@,X.DXC5,PERIOD)</span></div><div class="btn dis" style="left:309px;top:829px;width:82px;height:26px;line-height:25px">Setup...</div><div class="btn dis" style="left:400px;top:829px;width:82px;height:26px;line-height:25px">Offset...</div><div class="btn dis" style="left:824px;top:829px;width:52px;height:26px;line-height:25px">Undo</div><div class="btn dis" style="left:885px;top:829px;width:52px;height:26px;line-height:25px">Redo</div><div class="abs" style="left:308px;top:866px;width:630px;height:1px;background:#a0a0a0"></div><div class="ui" style="left:308px;top:881px;font-weight:bold;font-size:12.8px;color:#222">Edit Permissions...</div><div class="ui" style="left:436px;top:878px;width:38px;height:19px;border-top:1px solid #a0a0a0;border-left:1px solid #a0a0a0;padding:3px 0 0 6px;font-size:12.3px">PWD</div><div class="ui" style="left:481px;top:878px;width:36px;height:19px;border-top:1px solid #a0a0a0;border-left:1px solid #a0a0a0;padding:3px 0 0 6px;font-size:12.3px">R/O</div><div class="ui" style="left:569px;top:878px;width:36px;height:19px;border-top:1px solid #a0a0a0;border-left:1px solid #a0a0a0;padding:3px 0 0 6px;font-size:12.3px">&nbsp;DE</div><div class="ui" style="left:660px;top:881px;font-weight:bold;font-size:12.8px;color:#222">Unlock...</div><div class="ui" style="left:725px;top:881px">Creator:</div><div class="ui" style="left:779px;top:878px;width:158px;height:19px;border-top:1px solid #a0a0a0;border-left:1px solid #a0a0a0;padding:3px 0 0 6px;font-size:12.3px">CQG</div><div class="btn def" style="left:298px;top:916px;width:67px;height:26px;line-height:25px">Toolbox</div><div class="btn " style="left:374px;top:916px;width:120px;height:26px;line-height:25px">Preferences...</div><div class="btn " style="left:739px;top:916px;width:100px;height:26px;line-height:25px">Close</div><div class="btn " style="left:848px;top:916px;width:100px;height:26px;line-height:25px">Apply</div>
<div class="dlg" style="left:966px;top:207px;width:462px;height:551px;background:linear-gradient(100deg,#4a5463 0%,#3d4656 10%,#2b3244 22%,#1f2739 40%,#1b2337 55%,#212b41 70%,#2c364a 100%)"></div><div class="abs" style="left:967px;top:208px;width:460px;height:33px;overflow:hidden;border-radius:6px 6px 0 0"><div class="abs" style="left:190px;top:2px;width:270px;height:3px;background:#a02030;filter:blur(3px);opacity:.55"></div><div class="abs" style="left:6px;top:-4px;width:12px;height:24px;background:#2f8a3a;filter:blur(5px);opacity:.7"></div><div class="abs" style="left:84px;top:-4px;width:10px;height:16px;background:#8a3a4a;filter:blur(5px);opacity:.5"></div><div class="abs" style="left:106px;top:-4px;width:10px;height:18px;background:#2f8a3a;filter:blur(5px);opacity:.5"></div><div class="abs" style="left:196px;top:0;width:16px;height:30px;background:#8a3a4a;filter:blur(5px);opacity:.7"></div><div class="abs" style="left:218px;top:4px;width:10px;height:30px;background:#2f8a3a;filter:blur(5px);opacity:.75"></div><div class="abs" style="left:240px;top:8px;width:10px;height:26px;background:#2f8a3a;filter:blur(5px);opacity:.7"></div><div class="abs" style="left:262px;top:0;width:12px;height:22px;background:#8a3a4a;filter:blur(5px);opacity:.6"></div><div class="abs" style="left:284px;top:10px;width:10px;height:18px;background:#8a3a4a;filter:blur(5px);opacity:.5"></div><div class="abs" style="left:296px;top:0;width:12px;height:24px;background:#2f8a3a;filter:blur(5px);opacity:.75"></div></div><div class="abs" style="left:967px;top:242px;width:460px;height:515px;background:#0c1426;border-radius:0 0 6px 6px"></div><div class="abs" style="left:968px;top:242px;width:2px;height:512px;background:#3a4a78;opacity:.25"></div><div class="abs" style="left:1423px;top:242px;width:2px;height:512px;background:#3a4a78;opacity:.2"></div><div class="dlgtitle" style="left:974px;top:216px">Formula Toolbox</div><div class="dclose" style="left:1361px;top:208px;width:61px;height:24px"><svg width="16" height="13" viewBox="0 0 16 13" style="position:absolute;left:22px;top:4px"><path d="M2 1.5 L14 11.5 M14 1.5 L2 11.5" stroke="#3a4050" stroke-width="4.4"/><path d="M2 1.5 L14 11.5 M14 1.5 L2 11.5" stroke="#fff" stroke-width="2.6"/></svg></div><div class="client" style="left:973px;top:241px;width:448px;height:509px"></div><div class="tbtn" style="left:982px;top:249px;width:40px">+</div><div class="tbtn" style="left:1030px;top:249px;width:39px">*</div><div class="tbtn" style="left:1076px;top:249px;width:39px">&gt;</div><div class="tbtn" style="left:1123px;top:249px;width:40px">&gt;=</div><div class="tbtn" style="left:1169px;top:249px;width:40px">=</div><div class="tbtn" style="left:1217px;top:249px;width:52px">And</div><div class="tbtn" style="left:1279px;top:249px;width:53px">(...)</div><div class="tbtn" style="left:1341px;top:249px;width:68px">/* */</div><div class="tbtn" style="left:982px;top:275px;width:40px">--</div><div class="tbtn" style="left:1030px;top:275px;width:39px">/</div><div class="tbtn" style="left:1076px;top:275px;width:39px">&lt;</div><div class="tbtn" style="left:1123px;top:275px;width:40px">&lt;=</div><div class="tbtn" style="left:1169px;top:275px;width:40px">&lt;&gt;</div><div class="tbtn" style="left:1217px;top:275px;width:52px">Or</div><div class="tbtn" style="left:1279px;top:275px;width:53px">Not</div><div class="tbtn" style="left:1341px;top:275px;width:68px">Line</div><div class="tbtn" style="left:982px;top:304px;width:99px">XAbove</div><div class="tbtn" style="left:1092px;top:304px;width:99px">GoingUp</div><div class="tbtn" style="left:1200px;top:304px;width:99px">TurnsUp</div><div class="tbtn" style="left:1310px;top:304px;width:99px">When</div><div class="tbtn" style="left:982px;top:329px;width:99px">XBelow</div><div class="tbtn" style="left:1092px;top:329px;width:99px">GoingDn</div><div class="tbtn" style="left:1200px;top:329px;width:99px">TurnsDn</div><div class="tbtn" style="left:1310px;top:329px;width:99px">If( , , )</div><div class="rad" style="left:984px;top:355px"></div><div class="tl" style="left:1002px;top:356px">Bar Value</div><div class="rad" style="left:984px;top:373px"><div class="abs" style="left:3px;top:3px;width:7px;height:7px;border-radius:50%;background:radial-gradient(circle at 35% 30%,#7fd4f4,#1b6fa8 55%,#0b2f5c)"></div></div><div class="tl" style="left:1002px;top:374px">Study</div><div class="rad" style="left:1115px;top:355px"></div><div class="tl" style="left:1133px;top:356px">Function</div><div class="rad" style="left:1115px;top:373px"></div><div class="tl" style="left:1133px;top:374px">Condition</div><div class="rad" style="left:1247px;top:355px"></div><div class="tl" style="left:1265px;top:356px">User Value</div><div class="rad" style="left:1247px;top:373px"></div><div class="tl" style="left:1265px;top:374px">Trade System</div><div class="abs" style="left:984px;top:393px;width:426px;height:226px;border:1px solid #828790;background:#fff;overflow:hidden"><div class="abs" style="left:13px;top:12px;width:1px;height:214px;border-left:1px dotted #9a9a9a"></div><div class="abs" style="left:19px;top:9px;width:5px;border-top:1px dotted #9a9a9a"></div><div class="plus" style="top:4px"></div><div class="tree" style="top:2px">Recently Used</div><div class="abs" style="left:19px;top:25px;width:5px;border-top:1px dotted #9a9a9a"></div><div class="plus" style="top:20px"></div><div class="tree" style="top:18px">3Daypvt^</div><div class="abs" style="left:19px;top:41px;width:5px;border-top:1px dotted #9a9a9a"></div><div class="plus" style="top:36px"></div><div class="tree" style="top:34px">A_750^</div><div class="abs" style="left:19px;top:57px;width:5px;border-top:1px dotted #9a9a9a"></div><div class="plus" style="top:52px"></div><div class="tree" style="top:50px">Accumulation/Distribution</div><div class="abs" style="left:19px;top:73px;width:5px;border-top:1px dotted #9a9a9a"></div><div class="plus" style="top:68px"></div><div class="tree" style="top:66px">Accumulative Swing Index</div><div class="abs" style="left:19px;top:89px;width:5px;border-top:1px dotted #9a9a9a"></div><div class="plus" style="top:84px"></div><div class="tree" style="top:82px">Adaptive Moving Average</div><div class="abs" style="left:19px;top:105px;width:5px;border-top:1px dotted #9a9a9a"></div><div class="plus" style="top:100px"></div><div class="tree" style="top:98px">ADX Divergence</div><div class="abs" style="left:19px;top:121px;width:5px;border-top:1px dotted #9a9a9a"></div><div class="plus" style="top:116px"></div><div class="tree" style="top:114px">ADX Steps</div><div class="abs" style="left:19px;top:137px;width:5px;border-top:1px dotted #9a9a9a"></div><div class="plus" style="top:132px"></div><div class="tree" style="top:130px">Alligator</div><div class="abs" style="left:19px;top:153px;width:5px;border-top:1px dotted #9a9a9a"></div><div class="plus" style="top:148px"></div><div class="tree" style="top:146px">ALLMA2^</div><div class="abs" style="left:19px;top:169px;width:5px;border-top:1px dotted #9a9a9a"></div><div class="plus" style="top:164px"></div><div class="tree" style="top:162px">ALLMAsys2^</div><div class="abs" style="left:19px;top:185px;width:5px;border-top:1px dotted #9a9a9a"></div><div class="plus" style="top:180px"></div><div class="tree" style="top:178px">Aroon Oscillator</div><div class="abs" style="left:19px;top:201px;width:5px;border-top:1px dotted #9a9a9a"></div><div class="plus" style="top:196px"></div><div class="tree" style="top:194px">ATM Add On Alert</div><div class="abs" style="left:19px;top:217px;width:5px;border-top:1px dotted #9a9a9a"></div><div class="plus" style="top:212px"></div><div class="tree" style="top:210px">ATM Background</div><div class="sbtrack" style="left:403px;top:0;width:21px;height:224px;background:linear-gradient(90deg,#e6e6e6,#f2f2f2)"></div><div class="abs" style="left:409.5px;top:8.5px;width:0;height:0;border-left:4px solid transparent;border-right:4px solid transparent;border-bottom:4px solid #404040"></div><div class="abs" style="left:409.5px;top:210.0px;width:0;height:0;border-left:4px solid transparent;border-right:4px solid transparent;border-top:4px solid #404040"></div><div class="thumb" style="left:404px;top:24px;width:19px;height:19px"><div class="abs" style="left:4px;top:4px;width:9px;height:1px;background:#666;box-shadow:0 3px 0 #666,0 6px 0 #666,0 9px 0 #666"></div></div></div><div class="tbtn" style="left:982px;top:625px;width:99px">Setup...</div><div class="chk" style="left:1098px;top:627px"></div><div class="tl" style="left:1116px;top:628px">Offset</div><div class="inp" style="left:1199px;top:626px;width:101px;height:19px;border-color:#d9dde3;padding:3px 0 0 5px;font-size:11.3px">-1</div><div class="abs" style="left:1267px;top:627px;width:32px;height:17px;background:#f0f0f0;border-left:1px solid #ccc"><div class="abs" style="left:1px;top:0;width:29px;height:8px;border:1px solid #b5b5b5;background:linear-gradient(#f6f6f6,#ddd)"></div><div class="abs" style="left:1px;top:9px;width:29px;height:8px;border:1px solid #b5b5b5;background:linear-gradient(#f6f6f6,#ddd)"></div></div><div class="abs" style="left:1279.5px;top:629.5px;width:0;height:0;border-left:3px solid transparent;border-right:3px solid transparent;border-bottom:3px solid #4a5eb8"></div><div class="abs" style="left:1279.5px;top:638.5px;width:0;height:0;border-left:3px solid transparent;border-right:3px solid transparent;border-top:3px solid #4a5eb8"></div><div class="tbtn" style="left:1310px;top:625px;width:99px">Apply</div><div class="tbtn" style="left:1200px;top:652px;width:99px;height:21px;line-height:19px">Undo</div><div class="tbtn" style="left:1310px;top:652px;width:99px;height:21px;line-height:19px">Insert</div><div class="tbtn" style="left:1310px;top:681px;width:99px;height:43px;line-height:13px;padding-top:8px;white-space:normal">Insert<br>Param</div><div class="inp" style="left:981px;top:680px;width:319px;height:45px;border-color:#828790"></div><div class="abs" style="left:983px;top:682px;width:49px;height:13px;background:#3399ff"></div><div class="tl" style="left:984px;top:682px;color:#72777f;font-size:11px;letter-spacing:-0.2px">PERIOD</div><div class="chk" style="left:981px;top:731px"><svg width="11" height="11" viewBox="0 0 11 11" style="position:absolute;left:1px;top:1px"><path d="M1.8 5.2 L4.3 9 L9.2 1.2" fill="none" stroke="#31347c" stroke-width="1.9"/></svg></div><div class="tl" style="left:1000px;top:732px">Tooltips</div><div class="chk" style="left:1098px;top:731px"><svg width="11" height="11" viewBox="0 0 11 11" style="position:absolute;left:1px;top:1px"><path d="M1.8 5.2 L4.3 9 L9.2 1.2" fill="none" stroke="#31347c" stroke-width="1.9"/></svg></div><div class="tl" style="left:1117px;top:732px">Title bar</div><div class="chk" style="left:1220px;top:731px"><svg width="11" height="11" viewBox="0 0 11 11" style="position:absolute;left:1px;top:1px"><path d="M1.8 5.2 L4.3 9 L9.2 1.2" fill="none" stroke="#31347c" stroke-width="1.9"/></svg></div><div class="tl" style="left:1238px;top:732px">Scalable buttons</div>
</div></body></html>
